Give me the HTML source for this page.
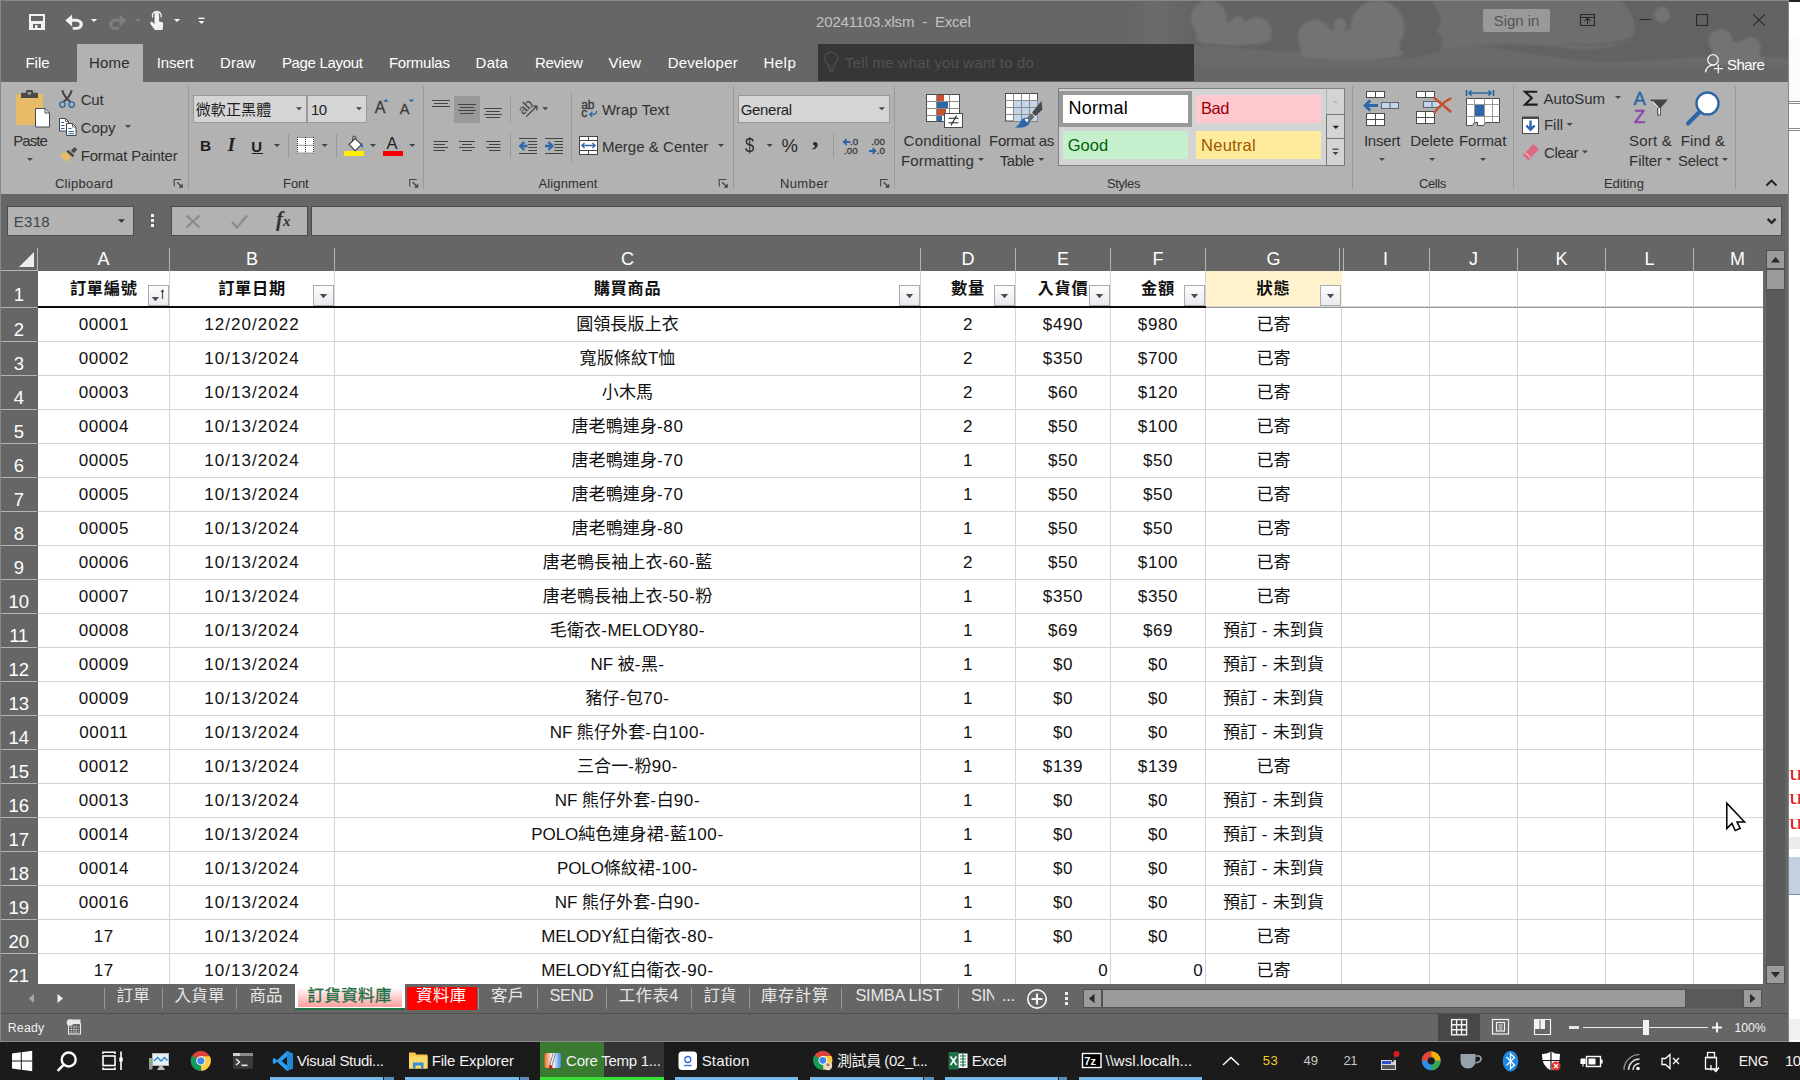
<!DOCTYPE html><html><head><meta charset="utf-8"><title>20241103.xlsm - Excel</title><style>html,body{margin:0;padding:0}body{width:1800px;height:1080px;position:relative;overflow:hidden;background:#fff;font-family:"Liberation Sans","Noto Sans CJK TC",sans-serif}
.b{position:absolute;box-sizing:border-box}.t{position:absolute;white-space:nowrap}svg{position:absolute;left:0;top:0}</style></head><body>
<div class="b" style="left:0px;top:0px;width:1800px;height:1080px;background:#ffffff;"></div>
<div class="b" style="left:1789px;top:0px;width:11px;height:2px;background:#222;"></div>
<div class="b" style="left:1789px;top:37px;width:11px;height:64px;background:#fbfbfb;"></div>
<div class="b" style="left:1789px;top:101px;width:11px;height:1px;background:#8a8a8a;"></div>
<div class="b" style="left:1789px;top:103px;width:11px;height:1px;background:#8a8a8a;"></div>
<div class="b" style="left:1789px;top:128px;width:11px;height:1px;background:#8a8a8a;"></div>
<div class="b" style="left:1789px;top:130px;width:11px;height:1px;background:#8a8a8a;"></div>
<div class="b" style="left:1789px;top:837px;width:11px;height:12px;background:#ececec;"></div>
<div class="b" style="left:1789px;top:857px;width:11px;height:38px;background:#c4cfdf;"></div>
<div class="b" style="left:1789px;top:894px;width:11px;height:1px;background:#7a8aa0;"></div>
<div class="b" style="left:1789px;top:1019px;width:11px;height:21px;background:#f0f0f0;"></div>
<div class="t" style="top:758.57px;font-size:20px;line-height:28px;color:#e8262a;left:1789.00px;font-family:'Liberation Serif',serif;transform:scaleX(1.35);transform-origin:left;"><span>u</span></div>
<div class="t" style="top:782.57px;font-size:20px;line-height:28px;color:#e8262a;left:1789.00px;font-family:'Liberation Serif',serif;transform:scaleX(1.35);transform-origin:left;"><span>u</span></div>
<div class="t" style="top:807.57px;font-size:20px;line-height:28px;color:#e8262a;left:1789.00px;font-family:'Liberation Serif',serif;transform:scaleX(1.35);transform-origin:left;"><span>u</span></div>
<div class="b" style="left:0px;top:0px;width:1789px;height:1042px;background:#666666;"></div>
<div class="b" style="left:0px;top:0px;width:1789px;height:1px;background:#888888;"></div>
<div class="b" style="left:0px;top:0px;width:1px;height:1042px;background:#888888;"></div>
<svg width="1800" height="82" viewBox="0 0 1800 82"><defs><filter id="bl" x="-5%" y="-20%" width="110%" height="140%"><feGaussianBlur stdDeviation=".8"/></filter><clipPath id="tc"><rect x="1" y="1" width="1788" height="65"/></clipPath><linearGradient id="tg" x1="0" x2="1"><stop offset="0" stop-color="#6b6b6b" stop-opacity="0"/><stop offset=".04" stop-color="#6b6b6b"/><stop offset=".1" stop-color="#636363"/><stop offset="1" stop-color="#626262"/></linearGradient></defs><rect x="1130" y="1" width="659" height="65" fill="url(#tg)"/><g clip-path="url(#tc)" filter="url(#bl)"><path d="M1150 66V47C1200 42 1250 50 1290 52S1380 62 1410 58S1460 44 1480 46S1560 60 1600 62S1700 52 1789 58V66Z" fill="#6a6a6a"/><path d="M1431 1H1622Q1642 25 1630 40Q1600 54 1560 47Q1500 40 1440 50Q1447 40 1436 30Q1447 18 1431 1Z" fill="#6e6e6e"/><g fill="#737373"><circle cx="1208.700" cy="18.300" r="18"/><circle cx="1238" cy="23" r="7"/><ellipse cx="1257.300" cy="30.300" rx="14" ry="13"/><ellipse cx="1234" cy="38" rx="38" ry="7"/><rect x="1196" y="22" width="72" height="22" rx="9"/><circle cx="1315" cy="36.700" r="17"/><circle cx="1340" cy="24.800" r="6.500"/><circle cx="1377.500" cy="27.500" r="27"/><ellipse cx="1352" cy="53" rx="52" ry="6.500"/><rect x="1300" y="30" width="100" height="28" rx="12"/><circle cx="1662" cy="14.700" r="8"/><circle cx="1720.500" cy="41.300" r="12"/><circle cx="1750" cy="48.600" r="11"/><ellipse cx="1737" cy="60" rx="28" ry="7"/><rect x="1712" y="42" width="48" height="22" rx="9"/></g><path d="M1568 43q30 6 62 -4.500" fill="none" stroke="#606060" stroke-width="1.500"/></g></svg>
<div class="t" style="top:10.90px;font-size:15px;line-height:21px;color:#c2c2c2;letter-spacing:-0.194px;left:816.10px;white-space:pre;"><span>20241103.xlsm  -  Excel</span></div>
<div class="b" style="left:1483px;top:9px;width:67px;height:23px;background:#999999;border-radius:2px;"></div>
<div class="t" style="top:9.90px;font-size:15px;line-height:21px;color:#555;letter-spacing:-0.068px;left:1493.80px;"><span>Sign in</span></div>
<div class="b" style="left:77px;top:44px;width:66px;height:38px;background:#b2b2b2;"></div>
<div class="t" style="top:52.30px;font-size:15px;line-height:21px;color:#fff;letter-spacing:0.007px;left:25.40px;"><span>File</span></div>
<div class="t" style="top:52.30px;font-size:15px;line-height:21px;color:#2b2b2b;letter-spacing:0.221px;left:89.00px;"><span>Home</span></div>
<div class="t" style="top:52.30px;font-size:15px;line-height:21px;color:#fff;letter-spacing:-0.103px;left:156.70px;"><span>Insert</span></div>
<div class="t" style="top:52.30px;font-size:15px;line-height:21px;color:#fff;letter-spacing:0.171px;left:219.90px;"><span>Draw</span></div>
<div class="t" style="top:52.30px;font-size:15px;line-height:21px;color:#fff;letter-spacing:-0.323px;left:281.90px;"><span>Page Layout</span></div>
<div class="t" style="top:52.30px;font-size:15px;line-height:21px;color:#fff;letter-spacing:-0.202px;left:388.90px;"><span>Formulas</span></div>
<div class="t" style="top:52.30px;font-size:15px;line-height:21px;color:#fff;letter-spacing:0.203px;left:475.60px;"><span>Data</span></div>
<div class="t" style="top:52.30px;font-size:15px;line-height:21px;color:#fff;letter-spacing:-0.248px;left:534.90px;"><span>Review</span></div>
<div class="t" style="top:52.30px;font-size:15px;line-height:21px;color:#fff;letter-spacing:0.113px;left:608.60px;"><span>View</span></div>
<div class="t" style="top:52.30px;font-size:15px;line-height:21px;color:#fff;letter-spacing:0.203px;left:667.70px;"><span>Developer</span></div>
<div class="t" style="top:52.30px;font-size:15px;line-height:21px;color:#fff;letter-spacing:0.510px;left:763.40px;"><span>Help</span></div>
<div class="b" style="left:818px;top:44px;width:376px;height:37px;background:#363636;"></div>
<div class="t" style="top:52.30px;font-size:15px;line-height:21px;color:#525252;letter-spacing:0.137px;left:845.10px;"><span>Tell me what you want to do</span></div>
<div class="t" style="top:54.30px;font-size:15px;line-height:21px;color:#fff;letter-spacing:-0.566px;left:1727.00px;"><span>Share</span></div>
<div class="b" style="left:1px;top:82px;width:1788px;height:112px;background:#b2b2b2;"></div>
<div class="b" style="left:188.0px;top:86px;width:1px;height:103px;background:#9a9a9a;"></div>
<div class="b" style="left:423.0px;top:86px;width:1px;height:103px;background:#9a9a9a;"></div>
<div class="b" style="left:733.0px;top:86px;width:1px;height:103px;background:#9a9a9a;"></div>
<div class="b" style="left:894.0px;top:86px;width:1px;height:103px;background:#9a9a9a;"></div>
<div class="b" style="left:1352.0px;top:86px;width:1px;height:103px;background:#9a9a9a;"></div>
<div class="b" style="left:1513.0px;top:86px;width:1px;height:103px;background:#9a9a9a;"></div>
<div class="b" style="left:1735.0px;top:86px;width:1px;height:103px;background:#9a9a9a;"></div>
<div class="b" style="left:288.0px;top:134px;width:1px;height:24px;background:#9a9a9a;"></div>
<div class="b" style="left:336.0px;top:134px;width:1px;height:24px;background:#9a9a9a;"></div>
<div class="b" style="left:510.0px;top:97px;width:1px;height:25px;background:#9a9a9a;"></div>
<div class="b" style="left:510.0px;top:134px;width:1px;height:24px;background:#9a9a9a;"></div>
<div class="b" style="left:571.0px;top:92px;width:1px;height:71px;background:#9a9a9a;"></div>
<div class="b" style="left:833.0px;top:134px;width:1px;height:24px;background:#9a9a9a;"></div>
<div class="t" style="top:129.80px;font-size:15px;line-height:21px;color:#303030;letter-spacing:-0.932px;left:13.20px;"><span>Paste</span></div>
<div class="t" style="top:89.00px;font-size:15px;line-height:21px;color:#303030;letter-spacing:-0.215px;left:80.70px;"><span>Cut</span></div>
<div class="t" style="top:116.80px;font-size:15px;line-height:21px;color:#303030;letter-spacing:-0.108px;left:80.70px;"><span>Copy</span></div>
<div class="t" style="top:144.80px;font-size:15px;line-height:21px;color:#303030;letter-spacing:-0.165px;left:80.70px;"><span>Format Painter</span></div>
<div class="t" style="top:174.90px;font-size:13px;line-height:18px;color:#303030;letter-spacing:0.316px;left:54.90px;"><span>Clipboard</span></div>
<div class="b" style="left:193px;top:95px;width:114px;height:28px;background:#d5d5d5;border:1px solid #989898;"></div>
<div class="b" style="left:307px;top:95px;width:60px;height:28px;background:#d5d5d5;border:1px solid #989898;"></div>
<div class="t" style="top:98.60px;font-size:15px;line-height:21px;color:#1e1e1e;letter-spacing:0.137px;left:195.70px;"><span>微軟正黑體</span></div>
<div class="t" style="top:98.80px;font-size:15px;line-height:21px;color:#1e1e1e;letter-spacing:-0.744px;left:311.10px;"><span>10</span></div>
<div class="t" style="top:97.46px;font-size:16px;line-height:22px;color:#3a3a3a;letter-spacing:0.528px;left:374.70px;-webkit-text-stroke:.3px #3a3a3a;"><span>A</span></div>
<div class="t" style="top:98.98px;font-size:14.5px;line-height:20px;color:#3a3a3a;letter-spacing:0.928px;left:399.80px;-webkit-text-stroke:.3px #3a3a3a;"><span>A</span></div>
<div class="t" style="top:134.93px;font-size:15.5px;line-height:22px;color:#1e1e1e;letter-spacing:-1.403px;left:199.90px;font-weight:700;"><span>B</span></div>
<div class="t" style="top:132.39px;font-size:18.5px;line-height:26px;color:#1e1e1e;left:227.70px;font-weight:700;font-style:italic;font-family:'Liberation Serif','DejaVu Serif',serif;"><span>I</span></div>
<div class="t" style="top:135.60px;font-size:15px;line-height:21px;color:#1e1e1e;letter-spacing:0.656px;left:251.30px;font-weight:700;"><span>U</span></div>
<div class="b" style="left:251.7px;top:152.6px;width:11px;height:1.2px;background:#1e1e1e;"></div>
<div class="b" style="left:344px;top:151px;width:20px;height:5px;background:#ffee00;"></div>
<div class="t" style="top:132.38px;font-size:16.5px;line-height:23px;color:#1e1e1e;letter-spacing:2.484px;left:386.40px;"><span>A</span></div>
<div class="b" style="left:383px;top:151px;width:20px;height:5px;background:#f40000;"></div>
<div class="t" style="top:174.90px;font-size:13px;line-height:18px;color:#303030;letter-spacing:-0.129px;left:283.10px;"><span>Font</span></div>
<div class="b" style="left:454px;top:96px;width:26px;height:27px;background:#999999;"></div>
<div class="t" style="top:99.00px;font-size:15px;line-height:21px;color:#303030;letter-spacing:0.057px;left:601.90px;"><span>Wrap Text</span></div>
<div class="t" style="top:136.00px;font-size:15px;line-height:21px;color:#303030;letter-spacing:0.044px;left:601.90px;"><span>Merge &amp; Center</span></div>
<div class="t" style="top:174.90px;font-size:13px;line-height:18px;color:#303030;letter-spacing:0.154px;left:538.40px;"><span>Alignment</span></div>
<div class="b" style="left:738px;top:95px;width:152px;height:28px;background:#d5d5d5;border:1px solid #989898;"></div>
<div class="t" style="top:99.00px;font-size:15px;line-height:21px;color:#1e1e1e;letter-spacing:-0.311px;left:740.70px;"><span>General</span></div>
<div class="t" style="top:131.07px;font-size:20px;line-height:28px;color:#2a2a2a;left:745.40px;transform:scaleX(.84);transform-origin:left;"><span>$</span></div>
<div class="t" style="top:133.09px;font-size:18.5px;line-height:26px;color:#2a2a2a;letter-spacing:-0.253px;left:781.40px;"><span>%</span></div>
<div class="t" style="top:120.29px;font-size:26px;line-height:36px;color:#2a2a2a;left:811.90px;font-weight:700;font-family:'Liberation Serif',serif;"><span>,</span></div>
<div class="t" style="top:174.90px;font-size:13px;line-height:18px;color:#303030;letter-spacing:0.408px;left:779.90px;"><span>Number</span></div>
<div class="t" style="top:129.80px;font-size:15px;line-height:21px;color:#303030;letter-spacing:0.222px;left:903.60px;"><span>Conditional</span></div>
<div class="t" style="top:149.80px;font-size:15px;line-height:21px;color:#303030;letter-spacing:0.110px;left:901.10px;"><span>Formatting</span></div>
<div class="t" style="top:129.80px;font-size:15px;line-height:21px;color:#303030;letter-spacing:-0.302px;left:989.10px;"><span>Format as</span></div>
<div class="t" style="top:149.80px;font-size:15px;line-height:21px;color:#303030;letter-spacing:-0.332px;left:999.70px;"><span>Table</span></div>
<div class="b" style="left:1058px;top:88px;width:287px;height:78px;background:#d4d4d4;border:1px solid #808080;"></div>
<div class="b" style="left:1059px;top:91px;width:133px;height:36px;background:#999999;"></div>
<div class="b" style="left:1063px;top:95px;width:125px;height:28px;background:#ffffff;"></div>
<div class="b" style="left:1196px;top:95px;width:125px;height:28px;background:#ffc7ce;"></div>
<div class="b" style="left:1063px;top:131px;width:125px;height:28px;background:#c6efce;"></div>
<div class="b" style="left:1196px;top:131px;width:125px;height:28px;background:#ffeb9c;"></div>
<div class="t" style="top:95.76px;font-size:18px;line-height:25px;color:#000;letter-spacing:0.281px;left:1068.40px;"><span>Normal</span></div>
<div class="t" style="top:97.28px;font-size:16.5px;line-height:23px;color:#9c0006;letter-spacing:-0.520px;left:1201.10px;"><span>Bad</span></div>
<div class="t" style="top:133.58px;font-size:16.5px;line-height:23px;color:#006100;letter-spacing:0.006px;left:1067.70px;"><span>Good</span></div>
<div class="t" style="top:133.58px;font-size:16.5px;line-height:23px;color:#9c5700;letter-spacing:0.228px;left:1201.10px;"><span>Neutral</span></div>
<div class="b" style="left:1326px;top:88px;width:19px;height:27px;background:#d4d4d4;border:1px solid #808080;border-left-color:#b4b4b4;"></div>
<div class="b" style="left:1326px;top:114px;width:19px;height:25px;background:#d4d4d4;border:1px solid #777;"></div>
<div class="b" style="left:1326px;top:138px;width:19px;height:28px;background:#d4d4d4;border:1px solid #777;"></div>
<div class="t" style="top:174.90px;font-size:13px;line-height:18px;color:#303030;letter-spacing:-0.368px;left:1106.90px;"><span>Styles</span></div>
<div class="t" style="top:129.80px;font-size:15px;line-height:21px;color:#303030;letter-spacing:-0.186px;left:1363.90px;"><span>Insert</span></div>
<div class="t" style="top:129.80px;font-size:15px;line-height:21px;color:#303030;letter-spacing:0.057px;left:1410.20px;"><span>Delete</span></div>
<div class="t" style="top:129.80px;font-size:15px;line-height:21px;color:#303030;letter-spacing:-0.003px;left:1458.90px;"><span>Format</span></div>
<div class="t" style="top:174.90px;font-size:13px;line-height:18px;color:#303030;letter-spacing:-0.421px;left:1419.10px;"><span>Cells</span></div>
<div class="t" style="top:88.10px;font-size:15px;line-height:21px;color:#303030;letter-spacing:-0.029px;left:1543.60px;"><span>AutoSum</span></div>
<div class="t" style="top:114.00px;font-size:15px;line-height:21px;color:#303030;letter-spacing:0.007px;left:1543.90px;"><span>Fill</span></div>
<div class="t" style="top:141.50px;font-size:15px;line-height:21px;color:#303030;letter-spacing:-0.332px;left:1543.90px;"><span>Clear</span></div>
<div class="t" style="top:86.39px;font-size:18.5px;line-height:26px;color:#2e67a7;letter-spacing:1.556px;left:1633.40px;-webkit-text-stroke:.5px #2e67a7;"><span>A</span></div>
<div class="t" style="top:103.59px;font-size:18.5px;line-height:26px;color:#8e44ad;letter-spacing:0.487px;left:1634.10px;-webkit-text-stroke:.5px #8e44ad;"><span>Z</span></div>
<div class="t" style="top:129.80px;font-size:15px;line-height:21px;color:#303030;letter-spacing:0.185px;left:1629.10px;"><span>Sort &amp;</span></div>
<div class="t" style="top:149.80px;font-size:15px;line-height:21px;color:#303030;letter-spacing:-0.091px;left:1629.10px;"><span>Filter</span></div>
<div class="t" style="top:129.80px;font-size:15px;line-height:21px;color:#303030;letter-spacing:0.173px;left:1680.70px;"><span>Find &amp;</span></div>
<div class="t" style="top:149.80px;font-size:15px;line-height:21px;color:#303030;letter-spacing:-0.284px;left:1678.10px;"><span>Select</span></div>
<div class="t" style="top:174.90px;font-size:13px;line-height:18px;color:#303030;letter-spacing:0.036px;left:1603.90px;"><span>Editing</span></div>
<div class="b" style="left:7px;top:206px;width:127px;height:30px;background:#b2b2b2;border:1px solid #4d4d4d;"></div>
<div class="t" style="top:211.00px;font-size:15px;line-height:21px;color:#444;letter-spacing:0.288px;left:13.80px;"><span>E318</span></div>
<div class="b" style="left:151px;top:214.2px;width:3.2px;height:3.2px;background:#f2f2f2;"></div>
<div class="b" style="left:151px;top:219px;width:3.2px;height:3.2px;background:#f2f2f2;"></div>
<div class="b" style="left:151px;top:223.8px;width:3.2px;height:3.2px;background:#f2f2f2;"></div>
<div class="b" style="left:171px;top:206px;width:137px;height:30px;background:#b2b2b2;border:1px solid #4d4d4d;"></div>
<div class="t" style="top:204.72px;font-size:21px;line-height:29px;color:#333;left:275.90px;font-weight:700;font-style:italic;font-family:'Liberation Serif',serif;"><span>f</span></div>
<div class="t" style="top:211.30px;font-size:15px;line-height:21px;color:#333;left:282.90px;font-weight:700;font-style:italic;font-family:'Liberation Serif',serif;"><span>x</span></div>
<div class="b" style="left:311px;top:206px;width:1471px;height:30px;background:#b2b2b2;border:1px solid #4d4d4d;"></div>
<div class="b" style="left:1px;top:248px;width:1762px;height:23px;background:#666666;"></div>
<div class="b" style="left:38px;top:271px;width:1725px;height:713px;background:#ffffff;"></div>
<div class="b" style="left:1px;top:270px;width:36px;height:1px;background:#b4b4b4;"></div>
<div class="b" style="left:37px;top:248px;width:1px;height:23px;background:#b4b4b4;"></div>
<div class="t" style="top:246.66px;font-size:18px;line-height:25px;color:#ffffff;left:63.50px;width:80px;text-align:center;"><span>A</span></div>
<div class="b" style="left:169px;top:248px;width:1px;height:23px;background:#b4b4b4;"></div>
<div class="t" style="top:246.66px;font-size:18px;line-height:25px;color:#ffffff;left:212.00px;width:80px;text-align:center;"><span>B</span></div>
<div class="b" style="left:334px;top:248px;width:1px;height:23px;background:#b4b4b4;"></div>
<div class="t" style="top:246.66px;font-size:18px;line-height:25px;color:#ffffff;left:587.50px;width:80px;text-align:center;"><span>C</span></div>
<div class="b" style="left:920px;top:248px;width:1px;height:23px;background:#b4b4b4;"></div>
<div class="t" style="top:246.66px;font-size:18px;line-height:25px;color:#ffffff;left:928.00px;width:80px;text-align:center;"><span>D</span></div>
<div class="b" style="left:1015px;top:248px;width:1px;height:23px;background:#b4b4b4;"></div>
<div class="t" style="top:246.66px;font-size:18px;line-height:25px;color:#ffffff;left:1023.00px;width:80px;text-align:center;"><span>E</span></div>
<div class="b" style="left:1110px;top:248px;width:1px;height:23px;background:#b4b4b4;"></div>
<div class="t" style="top:246.66px;font-size:18px;line-height:25px;color:#ffffff;left:1118.00px;width:80px;text-align:center;"><span>F</span></div>
<div class="b" style="left:1205px;top:248px;width:1px;height:23px;background:#b4b4b4;"></div>
<div class="t" style="top:246.66px;font-size:18px;line-height:25px;color:#ffffff;left:1233.50px;width:80px;text-align:center;"><span>G</span></div>
<div class="t" style="top:246.66px;font-size:18px;line-height:25px;color:#ffffff;left:1345.50px;width:80px;text-align:center;"><span>I</span></div>
<div class="b" style="left:1429px;top:248px;width:1px;height:23px;background:#b4b4b4;"></div>
<div class="t" style="top:246.66px;font-size:18px;line-height:25px;color:#ffffff;left:1433.50px;width:80px;text-align:center;"><span>J</span></div>
<div class="b" style="left:1517px;top:248px;width:1px;height:23px;background:#b4b4b4;"></div>
<div class="t" style="top:246.66px;font-size:18px;line-height:25px;color:#ffffff;left:1521.50px;width:80px;text-align:center;"><span>K</span></div>
<div class="b" style="left:1605px;top:248px;width:1px;height:23px;background:#b4b4b4;"></div>
<div class="t" style="top:246.66px;font-size:18px;line-height:25px;color:#ffffff;left:1609.50px;width:80px;text-align:center;"><span>L</span></div>
<div class="b" style="left:1693px;top:248px;width:1px;height:23px;background:#b4b4b4;"></div>
<div class="t" style="top:246.66px;font-size:18px;line-height:25px;color:#ffffff;left:1697.50px;width:80px;text-align:center;"><span>M</span></div>
<div class="b" style="left:1339px;top:248px;width:1px;height:23px;background:#b4b4b4;"></div>
<div class="b" style="left:1343px;top:248px;width:1px;height:23px;background:#b4b4b4;"></div>
<div class="b" style="left:169px;top:271px;width:1px;height:713px;background:#d4d4d4;"></div>
<div class="b" style="left:334px;top:271px;width:1px;height:713px;background:#d4d4d4;"></div>
<div class="b" style="left:920px;top:271px;width:1px;height:713px;background:#d4d4d4;"></div>
<div class="b" style="left:1015px;top:271px;width:1px;height:713px;background:#d4d4d4;"></div>
<div class="b" style="left:1110px;top:271px;width:1px;height:713px;background:#d4d4d4;"></div>
<div class="b" style="left:1205px;top:271px;width:1px;height:713px;background:#d4d4d4;"></div>
<div class="b" style="left:1341px;top:271px;width:1px;height:713px;background:#d4d4d4;"></div>
<div class="b" style="left:1429px;top:271px;width:1px;height:713px;background:#d4d4d4;"></div>
<div class="b" style="left:1517px;top:271px;width:1px;height:713px;background:#d4d4d4;"></div>
<div class="b" style="left:1605px;top:271px;width:1px;height:713px;background:#d4d4d4;"></div>
<div class="b" style="left:1693px;top:271px;width:1px;height:713px;background:#d4d4d4;"></div>
<div class="b" style="left:1206px;top:271px;width:136px;height:36px;background:#fff2cc;"></div>
<div class="b" style="left:1px;top:271px;width:37px;height:713px;background:#666666;"></div>
<div class="b" style="left:38px;top:306px;width:1725px;height:1px;background:#d4d4d4;"></div>
<div class="b" style="left:1px;top:307px;width:36px;height:1px;background:#b4b4b4;"></div>
<div class="t" style="top:281.79px;font-size:18.5px;line-height:26px;color:#ffffff;left:-1.20px;width:40px;text-align:center;clip-path:inset(0 0 0px 0);"><span>1</span></div>
<div class="b" style="left:38px;top:341px;width:1725px;height:1px;background:#d4d4d4;"></div>
<div class="b" style="left:1px;top:341px;width:36px;height:1px;background:#b4b4b4;"></div>
<div class="t" style="top:316.79px;font-size:18.5px;line-height:26px;color:#ffffff;left:-1.20px;width:40px;text-align:center;clip-path:inset(0 0 0px 0);"><span>2</span></div>
<div class="b" style="left:38px;top:375px;width:1725px;height:1px;background:#d4d4d4;"></div>
<div class="b" style="left:1px;top:375px;width:36px;height:1px;background:#b4b4b4;"></div>
<div class="t" style="top:350.79px;font-size:18.5px;line-height:26px;color:#ffffff;left:-1.20px;width:40px;text-align:center;clip-path:inset(0 0 0px 0);"><span>3</span></div>
<div class="b" style="left:38px;top:409px;width:1725px;height:1px;background:#d4d4d4;"></div>
<div class="b" style="left:1px;top:409px;width:36px;height:1px;background:#b4b4b4;"></div>
<div class="t" style="top:384.79px;font-size:18.5px;line-height:26px;color:#ffffff;left:-1.20px;width:40px;text-align:center;clip-path:inset(0 0 0px 0);"><span>4</span></div>
<div class="b" style="left:38px;top:443px;width:1725px;height:1px;background:#d4d4d4;"></div>
<div class="b" style="left:1px;top:443px;width:36px;height:1px;background:#b4b4b4;"></div>
<div class="t" style="top:418.79px;font-size:18.5px;line-height:26px;color:#ffffff;left:-1.20px;width:40px;text-align:center;clip-path:inset(0 0 0px 0);"><span>5</span></div>
<div class="b" style="left:38px;top:477px;width:1725px;height:1px;background:#d4d4d4;"></div>
<div class="b" style="left:1px;top:477px;width:36px;height:1px;background:#b4b4b4;"></div>
<div class="t" style="top:452.79px;font-size:18.5px;line-height:26px;color:#ffffff;left:-1.20px;width:40px;text-align:center;clip-path:inset(0 0 0px 0);"><span>6</span></div>
<div class="b" style="left:38px;top:511px;width:1725px;height:1px;background:#d4d4d4;"></div>
<div class="b" style="left:1px;top:511px;width:36px;height:1px;background:#b4b4b4;"></div>
<div class="t" style="top:486.79px;font-size:18.5px;line-height:26px;color:#ffffff;left:-1.20px;width:40px;text-align:center;clip-path:inset(0 0 0px 0);"><span>7</span></div>
<div class="b" style="left:38px;top:545px;width:1725px;height:1px;background:#d4d4d4;"></div>
<div class="b" style="left:1px;top:545px;width:36px;height:1px;background:#b4b4b4;"></div>
<div class="t" style="top:520.79px;font-size:18.5px;line-height:26px;color:#ffffff;left:-1.20px;width:40px;text-align:center;clip-path:inset(0 0 0px 0);"><span>8</span></div>
<div class="b" style="left:38px;top:579px;width:1725px;height:1px;background:#d4d4d4;"></div>
<div class="b" style="left:1px;top:579px;width:36px;height:1px;background:#b4b4b4;"></div>
<div class="t" style="top:554.79px;font-size:18.5px;line-height:26px;color:#ffffff;left:-1.20px;width:40px;text-align:center;clip-path:inset(0 0 0px 0);"><span>9</span></div>
<div class="b" style="left:38px;top:613px;width:1725px;height:1px;background:#d4d4d4;"></div>
<div class="b" style="left:1px;top:613px;width:36px;height:1px;background:#b4b4b4;"></div>
<div class="t" style="top:588.79px;font-size:18.5px;line-height:26px;color:#ffffff;left:-1.20px;width:40px;text-align:center;clip-path:inset(0 0 0px 0);"><span>10</span></div>
<div class="b" style="left:38px;top:647px;width:1725px;height:1px;background:#d4d4d4;"></div>
<div class="b" style="left:1px;top:647px;width:36px;height:1px;background:#b4b4b4;"></div>
<div class="t" style="top:622.79px;font-size:18.5px;line-height:26px;color:#ffffff;left:-1.20px;width:40px;text-align:center;clip-path:inset(0 0 0px 0);"><span>11</span></div>
<div class="b" style="left:38px;top:681px;width:1725px;height:1px;background:#d4d4d4;"></div>
<div class="b" style="left:1px;top:681px;width:36px;height:1px;background:#b4b4b4;"></div>
<div class="t" style="top:656.79px;font-size:18.5px;line-height:26px;color:#ffffff;left:-1.20px;width:40px;text-align:center;clip-path:inset(0 0 0px 0);"><span>12</span></div>
<div class="b" style="left:38px;top:715px;width:1725px;height:1px;background:#d4d4d4;"></div>
<div class="b" style="left:1px;top:715px;width:36px;height:1px;background:#b4b4b4;"></div>
<div class="t" style="top:690.79px;font-size:18.5px;line-height:26px;color:#ffffff;left:-1.20px;width:40px;text-align:center;clip-path:inset(0 0 0px 0);"><span>13</span></div>
<div class="b" style="left:38px;top:749px;width:1725px;height:1px;background:#d4d4d4;"></div>
<div class="b" style="left:1px;top:749px;width:36px;height:1px;background:#b4b4b4;"></div>
<div class="t" style="top:724.79px;font-size:18.5px;line-height:26px;color:#ffffff;left:-1.20px;width:40px;text-align:center;clip-path:inset(0 0 0px 0);"><span>14</span></div>
<div class="b" style="left:38px;top:783px;width:1725px;height:1px;background:#d4d4d4;"></div>
<div class="b" style="left:1px;top:783px;width:36px;height:1px;background:#b4b4b4;"></div>
<div class="t" style="top:758.79px;font-size:18.5px;line-height:26px;color:#ffffff;left:-1.20px;width:40px;text-align:center;clip-path:inset(0 0 0px 0);"><span>15</span></div>
<div class="b" style="left:38px;top:817px;width:1725px;height:1px;background:#d4d4d4;"></div>
<div class="b" style="left:1px;top:817px;width:36px;height:1px;background:#b4b4b4;"></div>
<div class="t" style="top:792.79px;font-size:18.5px;line-height:26px;color:#ffffff;left:-1.20px;width:40px;text-align:center;clip-path:inset(0 0 0px 0);"><span>16</span></div>
<div class="b" style="left:38px;top:851px;width:1725px;height:1px;background:#d4d4d4;"></div>
<div class="b" style="left:1px;top:851px;width:36px;height:1px;background:#b4b4b4;"></div>
<div class="t" style="top:826.79px;font-size:18.5px;line-height:26px;color:#ffffff;left:-1.20px;width:40px;text-align:center;clip-path:inset(0 0 0px 0);"><span>17</span></div>
<div class="b" style="left:38px;top:885px;width:1725px;height:1px;background:#d4d4d4;"></div>
<div class="b" style="left:1px;top:885px;width:36px;height:1px;background:#b4b4b4;"></div>
<div class="t" style="top:860.79px;font-size:18.5px;line-height:26px;color:#ffffff;left:-1.20px;width:40px;text-align:center;clip-path:inset(0 0 0px 0);"><span>18</span></div>
<div class="b" style="left:38px;top:919px;width:1725px;height:1px;background:#d4d4d4;"></div>
<div class="b" style="left:1px;top:919px;width:36px;height:1px;background:#b4b4b4;"></div>
<div class="t" style="top:894.79px;font-size:18.5px;line-height:26px;color:#ffffff;left:-1.20px;width:40px;text-align:center;clip-path:inset(0 0 0px 0);"><span>19</span></div>
<div class="b" style="left:38px;top:953px;width:1725px;height:1px;background:#d4d4d4;"></div>
<div class="b" style="left:1px;top:953px;width:36px;height:1px;background:#b4b4b4;"></div>
<div class="t" style="top:928.79px;font-size:18.5px;line-height:26px;color:#ffffff;left:-1.20px;width:40px;text-align:center;clip-path:inset(0 0 0px 0);"><span>20</span></div>
<div class="t" style="top:962.79px;font-size:18.5px;line-height:26px;color:#ffffff;left:-1.20px;width:40px;text-align:center;clip-path:inset(0 0 3px 0);"><span>21</span></div>
<div class="b" style="left:1206px;top:307px;width:557px;height:1px;background:#9a9a9a;"></div>
<div class="b" style="left:38px;top:306px;width:1168px;height:2px;background:#0a0a0a;"></div>
<div class="b" style="left:148px;top:285px;width:21px;height:21px;background:linear-gradient(#fdfdfd,#e9eaee);border:1px solid #a9acb5;"></div>
<div class="b" style="left:313px;top:285px;width:21px;height:21px;background:linear-gradient(#fdfdfd,#e9eaee);border:1px solid #a9acb5;"></div>
<div class="b" style="left:899px;top:285px;width:21px;height:21px;background:linear-gradient(#fdfdfd,#e9eaee);border:1px solid #a9acb5;"></div>
<div class="b" style="left:994px;top:285px;width:21px;height:21px;background:linear-gradient(#fdfdfd,#e9eaee);border:1px solid #a9acb5;"></div>
<div class="b" style="left:1089px;top:285px;width:21px;height:21px;background:linear-gradient(#fdfdfd,#e9eaee);border:1px solid #a9acb5;"></div>
<div class="b" style="left:1184px;top:285px;width:21px;height:21px;background:linear-gradient(#fdfdfd,#e9eaee);border:1px solid #a9acb5;"></div>
<div class="b" style="left:1320px;top:285px;width:21px;height:21px;background:linear-gradient(#fdfdfd,#e9eaee);border:1px solid #a9acb5;"></div>
<div class="t" style="top:277.49px;font-size:16.2px;line-height:23px;color:#111;left:3.80px;width:200px;text-align:center;font-weight:700;letter-spacing:.75px;"><span>訂單編號</span></div>
<div class="t" style="top:277.49px;font-size:16.2px;line-height:23px;color:#111;left:152.00px;width:200px;text-align:center;font-weight:700;letter-spacing:.75px;"><span>訂單日期</span></div>
<div class="t" style="top:277.49px;font-size:16.2px;line-height:23px;color:#111;left:527.50px;width:200px;text-align:center;font-weight:700;letter-spacing:.75px;"><span>購買商品</span></div>
<div class="t" style="top:277.49px;font-size:16.2px;line-height:23px;color:#111;left:868.00px;width:200px;text-align:center;font-weight:700;letter-spacing:.75px;"><span>數量</span></div>
<div class="t" style="top:277.49px;font-size:16.2px;line-height:23px;color:#111;left:963.00px;width:200px;text-align:center;font-weight:700;letter-spacing:.75px;"><span>入貨價</span></div>
<div class="t" style="top:277.49px;font-size:16.2px;line-height:23px;color:#111;left:1058.00px;width:200px;text-align:center;font-weight:700;letter-spacing:.75px;"><span>金額</span></div>
<div class="t" style="top:277.49px;font-size:16.2px;line-height:23px;color:#111;left:1173.50px;width:200px;text-align:center;font-weight:700;letter-spacing:.75px;"><span>狀態</span></div>
<div class="t" style="top:312.81px;font-size:17px;line-height:24px;color:#111;left:-46.20px;width:300px;text-align:center;"><span><span style="letter-spacing:0.62px">00001</span></span></div>
<div class="t" style="top:312.81px;font-size:17px;line-height:24px;color:#111;left:102.00px;width:300px;text-align:center;"><span><span style="letter-spacing:1.05px">12/20/2022</span></span></div>
<div class="t" style="top:312.81px;font-size:17px;line-height:24px;color:#111;left:477.50px;width:300px;text-align:center;"><span><span style="letter-spacing:0.12px">圓領長版上衣</span></span></div>
<div class="t" style="top:312.81px;font-size:17px;line-height:24px;color:#111;left:818.00px;width:300px;text-align:center;"><span><span style="letter-spacing:0.62px">2</span></span></div>
<div class="t" style="top:312.81px;font-size:17px;line-height:24px;color:#111;left:913.00px;width:300px;text-align:center;"><span><span style="letter-spacing:0.62px">$490</span></span></div>
<div class="t" style="top:312.81px;font-size:17px;line-height:24px;color:#111;left:1008.00px;width:300px;text-align:center;"><span><span style="letter-spacing:0.62px">$980</span></span></div>
<div class="t" style="top:312.81px;font-size:17px;line-height:24px;color:#111;left:1123.50px;width:300px;text-align:center;"><span><span style="letter-spacing:0.12px">已寄</span></span></div>
<div class="t" style="top:346.81px;font-size:17px;line-height:24px;color:#111;left:-46.20px;width:300px;text-align:center;"><span><span style="letter-spacing:0.62px">00002</span></span></div>
<div class="t" style="top:346.81px;font-size:17px;line-height:24px;color:#111;left:102.00px;width:300px;text-align:center;"><span><span style="letter-spacing:1.05px">10/13/2024</span></span></div>
<div class="t" style="top:346.81px;font-size:17px;line-height:24px;color:#111;left:477.50px;width:300px;text-align:center;"><span><span style="letter-spacing:0.12px">寬版條紋</span><span style="letter-spacing:-0.1px">T</span><span style="letter-spacing:0.12px">恤</span></span></div>
<div class="t" style="top:346.81px;font-size:17px;line-height:24px;color:#111;left:818.00px;width:300px;text-align:center;"><span><span style="letter-spacing:0.62px">2</span></span></div>
<div class="t" style="top:346.81px;font-size:17px;line-height:24px;color:#111;left:913.00px;width:300px;text-align:center;"><span><span style="letter-spacing:0.62px">$350</span></span></div>
<div class="t" style="top:346.81px;font-size:17px;line-height:24px;color:#111;left:1008.00px;width:300px;text-align:center;"><span><span style="letter-spacing:0.62px">$700</span></span></div>
<div class="t" style="top:346.81px;font-size:17px;line-height:24px;color:#111;left:1123.50px;width:300px;text-align:center;"><span><span style="letter-spacing:0.12px">已寄</span></span></div>
<div class="t" style="top:380.81px;font-size:17px;line-height:24px;color:#111;left:-46.20px;width:300px;text-align:center;"><span><span style="letter-spacing:0.62px">00003</span></span></div>
<div class="t" style="top:380.81px;font-size:17px;line-height:24px;color:#111;left:102.00px;width:300px;text-align:center;"><span><span style="letter-spacing:1.05px">10/13/2024</span></span></div>
<div class="t" style="top:380.81px;font-size:17px;line-height:24px;color:#111;left:477.50px;width:300px;text-align:center;"><span><span style="letter-spacing:0.12px">小木馬</span></span></div>
<div class="t" style="top:380.81px;font-size:17px;line-height:24px;color:#111;left:818.00px;width:300px;text-align:center;"><span><span style="letter-spacing:0.62px">2</span></span></div>
<div class="t" style="top:380.81px;font-size:17px;line-height:24px;color:#111;left:913.00px;width:300px;text-align:center;"><span><span style="letter-spacing:0.62px">$60</span></span></div>
<div class="t" style="top:380.81px;font-size:17px;line-height:24px;color:#111;left:1008.00px;width:300px;text-align:center;"><span><span style="letter-spacing:0.62px">$120</span></span></div>
<div class="t" style="top:380.81px;font-size:17px;line-height:24px;color:#111;left:1123.50px;width:300px;text-align:center;"><span><span style="letter-spacing:0.12px">已寄</span></span></div>
<div class="t" style="top:414.81px;font-size:17px;line-height:24px;color:#111;left:-46.20px;width:300px;text-align:center;"><span><span style="letter-spacing:0.62px">00004</span></span></div>
<div class="t" style="top:414.81px;font-size:17px;line-height:24px;color:#111;left:102.00px;width:300px;text-align:center;"><span><span style="letter-spacing:1.05px">10/13/2024</span></span></div>
<div class="t" style="top:414.81px;font-size:17px;line-height:24px;color:#111;left:477.50px;width:300px;text-align:center;"><span><span style="letter-spacing:0.12px">唐老鴨連身</span><span style="letter-spacing:0.62px">-80</span></span></div>
<div class="t" style="top:414.81px;font-size:17px;line-height:24px;color:#111;left:818.00px;width:300px;text-align:center;"><span><span style="letter-spacing:0.62px">2</span></span></div>
<div class="t" style="top:414.81px;font-size:17px;line-height:24px;color:#111;left:913.00px;width:300px;text-align:center;"><span><span style="letter-spacing:0.62px">$50</span></span></div>
<div class="t" style="top:414.81px;font-size:17px;line-height:24px;color:#111;left:1008.00px;width:300px;text-align:center;"><span><span style="letter-spacing:0.62px">$100</span></span></div>
<div class="t" style="top:414.81px;font-size:17px;line-height:24px;color:#111;left:1123.50px;width:300px;text-align:center;"><span><span style="letter-spacing:0.12px">已寄</span></span></div>
<div class="t" style="top:448.81px;font-size:17px;line-height:24px;color:#111;left:-46.20px;width:300px;text-align:center;"><span><span style="letter-spacing:0.62px">00005</span></span></div>
<div class="t" style="top:448.81px;font-size:17px;line-height:24px;color:#111;left:102.00px;width:300px;text-align:center;"><span><span style="letter-spacing:1.05px">10/13/2024</span></span></div>
<div class="t" style="top:448.81px;font-size:17px;line-height:24px;color:#111;left:477.50px;width:300px;text-align:center;"><span><span style="letter-spacing:0.12px">唐老鴨連身</span><span style="letter-spacing:0.62px">-70</span></span></div>
<div class="t" style="top:448.81px;font-size:17px;line-height:24px;color:#111;left:818.00px;width:300px;text-align:center;"><span><span style="letter-spacing:0.62px">1</span></span></div>
<div class="t" style="top:448.81px;font-size:17px;line-height:24px;color:#111;left:913.00px;width:300px;text-align:center;"><span><span style="letter-spacing:0.62px">$50</span></span></div>
<div class="t" style="top:448.81px;font-size:17px;line-height:24px;color:#111;left:1008.00px;width:300px;text-align:center;"><span><span style="letter-spacing:0.62px">$50</span></span></div>
<div class="t" style="top:448.81px;font-size:17px;line-height:24px;color:#111;left:1123.50px;width:300px;text-align:center;"><span><span style="letter-spacing:0.12px">已寄</span></span></div>
<div class="t" style="top:482.81px;font-size:17px;line-height:24px;color:#111;left:-46.20px;width:300px;text-align:center;"><span><span style="letter-spacing:0.62px">00005</span></span></div>
<div class="t" style="top:482.81px;font-size:17px;line-height:24px;color:#111;left:102.00px;width:300px;text-align:center;"><span><span style="letter-spacing:1.05px">10/13/2024</span></span></div>
<div class="t" style="top:482.81px;font-size:17px;line-height:24px;color:#111;left:477.50px;width:300px;text-align:center;"><span><span style="letter-spacing:0.12px">唐老鴨連身</span><span style="letter-spacing:0.62px">-70</span></span></div>
<div class="t" style="top:482.81px;font-size:17px;line-height:24px;color:#111;left:818.00px;width:300px;text-align:center;"><span><span style="letter-spacing:0.62px">1</span></span></div>
<div class="t" style="top:482.81px;font-size:17px;line-height:24px;color:#111;left:913.00px;width:300px;text-align:center;"><span><span style="letter-spacing:0.62px">$50</span></span></div>
<div class="t" style="top:482.81px;font-size:17px;line-height:24px;color:#111;left:1008.00px;width:300px;text-align:center;"><span><span style="letter-spacing:0.62px">$50</span></span></div>
<div class="t" style="top:482.81px;font-size:17px;line-height:24px;color:#111;left:1123.50px;width:300px;text-align:center;"><span><span style="letter-spacing:0.12px">已寄</span></span></div>
<div class="t" style="top:516.81px;font-size:17px;line-height:24px;color:#111;left:-46.20px;width:300px;text-align:center;"><span><span style="letter-spacing:0.62px">00005</span></span></div>
<div class="t" style="top:516.81px;font-size:17px;line-height:24px;color:#111;left:102.00px;width:300px;text-align:center;"><span><span style="letter-spacing:1.05px">10/13/2024</span></span></div>
<div class="t" style="top:516.81px;font-size:17px;line-height:24px;color:#111;left:477.50px;width:300px;text-align:center;"><span><span style="letter-spacing:0.12px">唐老鴨連身</span><span style="letter-spacing:0.62px">-80</span></span></div>
<div class="t" style="top:516.81px;font-size:17px;line-height:24px;color:#111;left:818.00px;width:300px;text-align:center;"><span><span style="letter-spacing:0.62px">1</span></span></div>
<div class="t" style="top:516.81px;font-size:17px;line-height:24px;color:#111;left:913.00px;width:300px;text-align:center;"><span><span style="letter-spacing:0.62px">$50</span></span></div>
<div class="t" style="top:516.81px;font-size:17px;line-height:24px;color:#111;left:1008.00px;width:300px;text-align:center;"><span><span style="letter-spacing:0.62px">$50</span></span></div>
<div class="t" style="top:516.81px;font-size:17px;line-height:24px;color:#111;left:1123.50px;width:300px;text-align:center;"><span><span style="letter-spacing:0.12px">已寄</span></span></div>
<div class="t" style="top:550.81px;font-size:17px;line-height:24px;color:#111;left:-46.20px;width:300px;text-align:center;"><span><span style="letter-spacing:0.62px">00006</span></span></div>
<div class="t" style="top:550.81px;font-size:17px;line-height:24px;color:#111;left:102.00px;width:300px;text-align:center;"><span><span style="letter-spacing:1.05px">10/13/2024</span></span></div>
<div class="t" style="top:550.81px;font-size:17px;line-height:24px;color:#111;left:477.50px;width:300px;text-align:center;"><span><span style="letter-spacing:0.12px">唐老鴨長袖上衣</span><span style="letter-spacing:0.62px">-60-</span><span style="letter-spacing:0.12px">藍</span></span></div>
<div class="t" style="top:550.81px;font-size:17px;line-height:24px;color:#111;left:818.00px;width:300px;text-align:center;"><span><span style="letter-spacing:0.62px">2</span></span></div>
<div class="t" style="top:550.81px;font-size:17px;line-height:24px;color:#111;left:913.00px;width:300px;text-align:center;"><span><span style="letter-spacing:0.62px">$50</span></span></div>
<div class="t" style="top:550.81px;font-size:17px;line-height:24px;color:#111;left:1008.00px;width:300px;text-align:center;"><span><span style="letter-spacing:0.62px">$100</span></span></div>
<div class="t" style="top:550.81px;font-size:17px;line-height:24px;color:#111;left:1123.50px;width:300px;text-align:center;"><span><span style="letter-spacing:0.12px">已寄</span></span></div>
<div class="t" style="top:584.81px;font-size:17px;line-height:24px;color:#111;left:-46.20px;width:300px;text-align:center;"><span><span style="letter-spacing:0.62px">00007</span></span></div>
<div class="t" style="top:584.81px;font-size:17px;line-height:24px;color:#111;left:102.00px;width:300px;text-align:center;"><span><span style="letter-spacing:1.05px">10/13/2024</span></span></div>
<div class="t" style="top:584.81px;font-size:17px;line-height:24px;color:#111;left:477.50px;width:300px;text-align:center;"><span><span style="letter-spacing:0.12px">唐老鴨長袖上衣</span><span style="letter-spacing:0.62px">-50-</span><span style="letter-spacing:0.12px">粉</span></span></div>
<div class="t" style="top:584.81px;font-size:17px;line-height:24px;color:#111;left:818.00px;width:300px;text-align:center;"><span><span style="letter-spacing:0.62px">1</span></span></div>
<div class="t" style="top:584.81px;font-size:17px;line-height:24px;color:#111;left:913.00px;width:300px;text-align:center;"><span><span style="letter-spacing:0.62px">$350</span></span></div>
<div class="t" style="top:584.81px;font-size:17px;line-height:24px;color:#111;left:1008.00px;width:300px;text-align:center;"><span><span style="letter-spacing:0.62px">$350</span></span></div>
<div class="t" style="top:584.81px;font-size:17px;line-height:24px;color:#111;left:1123.50px;width:300px;text-align:center;"><span><span style="letter-spacing:0.12px">已寄</span></span></div>
<div class="t" style="top:618.81px;font-size:17px;line-height:24px;color:#111;left:-46.20px;width:300px;text-align:center;"><span><span style="letter-spacing:0.62px">00008</span></span></div>
<div class="t" style="top:618.81px;font-size:17px;line-height:24px;color:#111;left:102.00px;width:300px;text-align:center;"><span><span style="letter-spacing:1.05px">10/13/2024</span></span></div>
<div class="t" style="top:618.81px;font-size:17px;line-height:24px;color:#111;left:477.50px;width:300px;text-align:center;"><span><span style="letter-spacing:0.12px">毛衛衣</span><span style="letter-spacing:0.62px">-</span><span style="letter-spacing:-0.1px">MELODY</span><span style="letter-spacing:0.62px">80-</span></span></div>
<div class="t" style="top:618.81px;font-size:17px;line-height:24px;color:#111;left:818.00px;width:300px;text-align:center;"><span><span style="letter-spacing:0.62px">1</span></span></div>
<div class="t" style="top:618.81px;font-size:17px;line-height:24px;color:#111;left:913.00px;width:300px;text-align:center;"><span><span style="letter-spacing:0.62px">$69</span></span></div>
<div class="t" style="top:618.81px;font-size:17px;line-height:24px;color:#111;left:1008.00px;width:300px;text-align:center;"><span><span style="letter-spacing:0.62px">$69</span></span></div>
<div class="t" style="top:618.81px;font-size:17px;line-height:24px;color:#111;left:1123.50px;width:300px;text-align:center;"><span><span style="letter-spacing:0.12px">預訂</span><span style="letter-spacing:-0.1px"> </span><span style="letter-spacing:0.62px">-</span><span style="letter-spacing:-0.1px"> </span><span style="letter-spacing:0.12px">未到貨</span></span></div>
<div class="t" style="top:652.81px;font-size:17px;line-height:24px;color:#111;left:-46.20px;width:300px;text-align:center;"><span><span style="letter-spacing:0.62px">00009</span></span></div>
<div class="t" style="top:652.81px;font-size:17px;line-height:24px;color:#111;left:102.00px;width:300px;text-align:center;"><span><span style="letter-spacing:1.05px">10/13/2024</span></span></div>
<div class="t" style="top:652.81px;font-size:17px;line-height:24px;color:#111;left:477.50px;width:300px;text-align:center;"><span><span style="letter-spacing:-0.1px">NF </span><span style="letter-spacing:0.12px">被</span><span style="letter-spacing:0.62px">-</span><span style="letter-spacing:0.12px">黑</span><span style="letter-spacing:0.62px">-</span></span></div>
<div class="t" style="top:652.81px;font-size:17px;line-height:24px;color:#111;left:818.00px;width:300px;text-align:center;"><span><span style="letter-spacing:0.62px">1</span></span></div>
<div class="t" style="top:652.81px;font-size:17px;line-height:24px;color:#111;left:913.00px;width:300px;text-align:center;"><span><span style="letter-spacing:0.62px">$0</span></span></div>
<div class="t" style="top:652.81px;font-size:17px;line-height:24px;color:#111;left:1008.00px;width:300px;text-align:center;"><span><span style="letter-spacing:0.62px">$0</span></span></div>
<div class="t" style="top:652.81px;font-size:17px;line-height:24px;color:#111;left:1123.50px;width:300px;text-align:center;"><span><span style="letter-spacing:0.12px">預訂</span><span style="letter-spacing:-0.1px"> </span><span style="letter-spacing:0.62px">-</span><span style="letter-spacing:-0.1px"> </span><span style="letter-spacing:0.12px">未到貨</span></span></div>
<div class="t" style="top:686.81px;font-size:17px;line-height:24px;color:#111;left:-46.20px;width:300px;text-align:center;"><span><span style="letter-spacing:0.62px">00009</span></span></div>
<div class="t" style="top:686.81px;font-size:17px;line-height:24px;color:#111;left:102.00px;width:300px;text-align:center;"><span><span style="letter-spacing:1.05px">10/13/2024</span></span></div>
<div class="t" style="top:686.81px;font-size:17px;line-height:24px;color:#111;left:477.50px;width:300px;text-align:center;"><span><span style="letter-spacing:0.12px">豬仔</span><span style="letter-spacing:0.62px">-</span><span style="letter-spacing:0.12px">包</span><span style="letter-spacing:0.62px">70-</span></span></div>
<div class="t" style="top:686.81px;font-size:17px;line-height:24px;color:#111;left:818.00px;width:300px;text-align:center;"><span><span style="letter-spacing:0.62px">1</span></span></div>
<div class="t" style="top:686.81px;font-size:17px;line-height:24px;color:#111;left:913.00px;width:300px;text-align:center;"><span><span style="letter-spacing:0.62px">$0</span></span></div>
<div class="t" style="top:686.81px;font-size:17px;line-height:24px;color:#111;left:1008.00px;width:300px;text-align:center;"><span><span style="letter-spacing:0.62px">$0</span></span></div>
<div class="t" style="top:686.81px;font-size:17px;line-height:24px;color:#111;left:1123.50px;width:300px;text-align:center;"><span><span style="letter-spacing:0.12px">預訂</span><span style="letter-spacing:-0.1px"> </span><span style="letter-spacing:0.62px">-</span><span style="letter-spacing:-0.1px"> </span><span style="letter-spacing:0.12px">未到貨</span></span></div>
<div class="t" style="top:720.81px;font-size:17px;line-height:24px;color:#111;left:-46.20px;width:300px;text-align:center;"><span><span style="letter-spacing:0.62px">00011</span></span></div>
<div class="t" style="top:720.81px;font-size:17px;line-height:24px;color:#111;left:102.00px;width:300px;text-align:center;"><span><span style="letter-spacing:1.05px">10/13/2024</span></span></div>
<div class="t" style="top:720.81px;font-size:17px;line-height:24px;color:#111;left:477.50px;width:300px;text-align:center;"><span><span style="letter-spacing:-0.1px">NF </span><span style="letter-spacing:0.12px">熊仔外套</span><span style="letter-spacing:0.62px">-</span><span style="letter-spacing:0.12px">白</span><span style="letter-spacing:0.62px">100-</span></span></div>
<div class="t" style="top:720.81px;font-size:17px;line-height:24px;color:#111;left:818.00px;width:300px;text-align:center;"><span><span style="letter-spacing:0.62px">1</span></span></div>
<div class="t" style="top:720.81px;font-size:17px;line-height:24px;color:#111;left:913.00px;width:300px;text-align:center;"><span><span style="letter-spacing:0.62px">$0</span></span></div>
<div class="t" style="top:720.81px;font-size:17px;line-height:24px;color:#111;left:1008.00px;width:300px;text-align:center;"><span><span style="letter-spacing:0.62px">$0</span></span></div>
<div class="t" style="top:720.81px;font-size:17px;line-height:24px;color:#111;left:1123.50px;width:300px;text-align:center;"><span><span style="letter-spacing:0.12px">預訂</span><span style="letter-spacing:-0.1px"> </span><span style="letter-spacing:0.62px">-</span><span style="letter-spacing:-0.1px"> </span><span style="letter-spacing:0.12px">未到貨</span></span></div>
<div class="t" style="top:754.81px;font-size:17px;line-height:24px;color:#111;left:-46.20px;width:300px;text-align:center;"><span><span style="letter-spacing:0.62px">00012</span></span></div>
<div class="t" style="top:754.81px;font-size:17px;line-height:24px;color:#111;left:102.00px;width:300px;text-align:center;"><span><span style="letter-spacing:1.05px">10/13/2024</span></span></div>
<div class="t" style="top:754.81px;font-size:17px;line-height:24px;color:#111;left:477.50px;width:300px;text-align:center;"><span><span style="letter-spacing:0.12px">三合一</span><span style="letter-spacing:0.62px">-</span><span style="letter-spacing:0.12px">粉</span><span style="letter-spacing:0.62px">90-</span></span></div>
<div class="t" style="top:754.81px;font-size:17px;line-height:24px;color:#111;left:818.00px;width:300px;text-align:center;"><span><span style="letter-spacing:0.62px">1</span></span></div>
<div class="t" style="top:754.81px;font-size:17px;line-height:24px;color:#111;left:913.00px;width:300px;text-align:center;"><span><span style="letter-spacing:0.62px">$139</span></span></div>
<div class="t" style="top:754.81px;font-size:17px;line-height:24px;color:#111;left:1008.00px;width:300px;text-align:center;"><span><span style="letter-spacing:0.62px">$139</span></span></div>
<div class="t" style="top:754.81px;font-size:17px;line-height:24px;color:#111;left:1123.50px;width:300px;text-align:center;"><span><span style="letter-spacing:0.12px">已寄</span></span></div>
<div class="t" style="top:788.81px;font-size:17px;line-height:24px;color:#111;left:-46.20px;width:300px;text-align:center;"><span><span style="letter-spacing:0.62px">00013</span></span></div>
<div class="t" style="top:788.81px;font-size:17px;line-height:24px;color:#111;left:102.00px;width:300px;text-align:center;"><span><span style="letter-spacing:1.05px">10/13/2024</span></span></div>
<div class="t" style="top:788.81px;font-size:17px;line-height:24px;color:#111;left:477.50px;width:300px;text-align:center;"><span><span style="letter-spacing:-0.1px">NF </span><span style="letter-spacing:0.12px">熊仔外套</span><span style="letter-spacing:0.62px">-</span><span style="letter-spacing:0.12px">白</span><span style="letter-spacing:0.62px">90-</span></span></div>
<div class="t" style="top:788.81px;font-size:17px;line-height:24px;color:#111;left:818.00px;width:300px;text-align:center;"><span><span style="letter-spacing:0.62px">1</span></span></div>
<div class="t" style="top:788.81px;font-size:17px;line-height:24px;color:#111;left:913.00px;width:300px;text-align:center;"><span><span style="letter-spacing:0.62px">$0</span></span></div>
<div class="t" style="top:788.81px;font-size:17px;line-height:24px;color:#111;left:1008.00px;width:300px;text-align:center;"><span><span style="letter-spacing:0.62px">$0</span></span></div>
<div class="t" style="top:788.81px;font-size:17px;line-height:24px;color:#111;left:1123.50px;width:300px;text-align:center;"><span><span style="letter-spacing:0.12px">預訂</span><span style="letter-spacing:-0.1px"> </span><span style="letter-spacing:0.62px">-</span><span style="letter-spacing:-0.1px"> </span><span style="letter-spacing:0.12px">未到貨</span></span></div>
<div class="t" style="top:822.81px;font-size:17px;line-height:24px;color:#111;left:-46.20px;width:300px;text-align:center;"><span><span style="letter-spacing:0.62px">00014</span></span></div>
<div class="t" style="top:822.81px;font-size:17px;line-height:24px;color:#111;left:102.00px;width:300px;text-align:center;"><span><span style="letter-spacing:1.05px">10/13/2024</span></span></div>
<div class="t" style="top:822.81px;font-size:17px;line-height:24px;color:#111;left:477.50px;width:300px;text-align:center;"><span><span style="letter-spacing:-0.1px">POLO</span><span style="letter-spacing:0.12px">純色連身裙</span><span style="letter-spacing:0.62px">-</span><span style="letter-spacing:0.12px">藍</span><span style="letter-spacing:0.62px">100-</span></span></div>
<div class="t" style="top:822.81px;font-size:17px;line-height:24px;color:#111;left:818.00px;width:300px;text-align:center;"><span><span style="letter-spacing:0.62px">1</span></span></div>
<div class="t" style="top:822.81px;font-size:17px;line-height:24px;color:#111;left:913.00px;width:300px;text-align:center;"><span><span style="letter-spacing:0.62px">$0</span></span></div>
<div class="t" style="top:822.81px;font-size:17px;line-height:24px;color:#111;left:1008.00px;width:300px;text-align:center;"><span><span style="letter-spacing:0.62px">$0</span></span></div>
<div class="t" style="top:822.81px;font-size:17px;line-height:24px;color:#111;left:1123.50px;width:300px;text-align:center;"><span><span style="letter-spacing:0.12px">預訂</span><span style="letter-spacing:-0.1px"> </span><span style="letter-spacing:0.62px">-</span><span style="letter-spacing:-0.1px"> </span><span style="letter-spacing:0.12px">未到貨</span></span></div>
<div class="t" style="top:856.81px;font-size:17px;line-height:24px;color:#111;left:-46.20px;width:300px;text-align:center;"><span><span style="letter-spacing:0.62px">00014</span></span></div>
<div class="t" style="top:856.81px;font-size:17px;line-height:24px;color:#111;left:102.00px;width:300px;text-align:center;"><span><span style="letter-spacing:1.05px">10/13/2024</span></span></div>
<div class="t" style="top:856.81px;font-size:17px;line-height:24px;color:#111;left:477.50px;width:300px;text-align:center;"><span><span style="letter-spacing:-0.1px">POLO</span><span style="letter-spacing:0.12px">條紋裙</span><span style="letter-spacing:0.62px">-100-</span></span></div>
<div class="t" style="top:856.81px;font-size:17px;line-height:24px;color:#111;left:818.00px;width:300px;text-align:center;"><span><span style="letter-spacing:0.62px">1</span></span></div>
<div class="t" style="top:856.81px;font-size:17px;line-height:24px;color:#111;left:913.00px;width:300px;text-align:center;"><span><span style="letter-spacing:0.62px">$0</span></span></div>
<div class="t" style="top:856.81px;font-size:17px;line-height:24px;color:#111;left:1008.00px;width:300px;text-align:center;"><span><span style="letter-spacing:0.62px">$0</span></span></div>
<div class="t" style="top:856.81px;font-size:17px;line-height:24px;color:#111;left:1123.50px;width:300px;text-align:center;"><span><span style="letter-spacing:0.12px">預訂</span><span style="letter-spacing:-0.1px"> </span><span style="letter-spacing:0.62px">-</span><span style="letter-spacing:-0.1px"> </span><span style="letter-spacing:0.12px">未到貨</span></span></div>
<div class="t" style="top:890.81px;font-size:17px;line-height:24px;color:#111;left:-46.20px;width:300px;text-align:center;"><span><span style="letter-spacing:0.62px">00016</span></span></div>
<div class="t" style="top:890.81px;font-size:17px;line-height:24px;color:#111;left:102.00px;width:300px;text-align:center;"><span><span style="letter-spacing:1.05px">10/13/2024</span></span></div>
<div class="t" style="top:890.81px;font-size:17px;line-height:24px;color:#111;left:477.50px;width:300px;text-align:center;"><span><span style="letter-spacing:-0.1px">NF </span><span style="letter-spacing:0.12px">熊仔外套</span><span style="letter-spacing:0.62px">-</span><span style="letter-spacing:0.12px">白</span><span style="letter-spacing:0.62px">90-</span></span></div>
<div class="t" style="top:890.81px;font-size:17px;line-height:24px;color:#111;left:818.00px;width:300px;text-align:center;"><span><span style="letter-spacing:0.62px">1</span></span></div>
<div class="t" style="top:890.81px;font-size:17px;line-height:24px;color:#111;left:913.00px;width:300px;text-align:center;"><span><span style="letter-spacing:0.62px">$0</span></span></div>
<div class="t" style="top:890.81px;font-size:17px;line-height:24px;color:#111;left:1008.00px;width:300px;text-align:center;"><span><span style="letter-spacing:0.62px">$0</span></span></div>
<div class="t" style="top:890.81px;font-size:17px;line-height:24px;color:#111;left:1123.50px;width:300px;text-align:center;"><span><span style="letter-spacing:0.12px">預訂</span><span style="letter-spacing:-0.1px"> </span><span style="letter-spacing:0.62px">-</span><span style="letter-spacing:-0.1px"> </span><span style="letter-spacing:0.12px">未到貨</span></span></div>
<div class="t" style="top:924.81px;font-size:17px;line-height:24px;color:#111;left:-46.20px;width:300px;text-align:center;"><span><span style="letter-spacing:0.62px">17</span></span></div>
<div class="t" style="top:924.81px;font-size:17px;line-height:24px;color:#111;left:102.00px;width:300px;text-align:center;"><span><span style="letter-spacing:1.05px">10/13/2024</span></span></div>
<div class="t" style="top:924.81px;font-size:17px;line-height:24px;color:#111;left:477.50px;width:300px;text-align:center;"><span><span style="letter-spacing:-0.1px">MELODY</span><span style="letter-spacing:0.12px">紅白衛衣</span><span style="letter-spacing:0.62px">-80-</span></span></div>
<div class="t" style="top:924.81px;font-size:17px;line-height:24px;color:#111;left:818.00px;width:300px;text-align:center;"><span><span style="letter-spacing:0.62px">1</span></span></div>
<div class="t" style="top:924.81px;font-size:17px;line-height:24px;color:#111;left:913.00px;width:300px;text-align:center;"><span><span style="letter-spacing:0.62px">$0</span></span></div>
<div class="t" style="top:924.81px;font-size:17px;line-height:24px;color:#111;left:1008.00px;width:300px;text-align:center;"><span><span style="letter-spacing:0.62px">$0</span></span></div>
<div class="t" style="top:924.81px;font-size:17px;line-height:24px;color:#111;left:1123.50px;width:300px;text-align:center;"><span><span style="letter-spacing:0.12px">已寄</span></span></div>
<div class="t" style="top:958.81px;font-size:17px;line-height:24px;color:#111;left:-46.20px;width:300px;text-align:center;"><span><span style="letter-spacing:0.62px">17</span></span></div>
<div class="t" style="top:958.81px;font-size:17px;line-height:24px;color:#111;left:102.00px;width:300px;text-align:center;"><span><span style="letter-spacing:1.05px">10/13/2024</span></span></div>
<div class="t" style="top:958.81px;font-size:17px;line-height:24px;color:#111;left:477.50px;width:300px;text-align:center;"><span><span style="letter-spacing:-0.1px">MELODY</span><span style="letter-spacing:0.12px">紅白衛衣</span><span style="letter-spacing:0.62px">-90-</span></span></div>
<div class="t" style="top:958.81px;font-size:17px;line-height:24px;color:#111;left:818.00px;width:300px;text-align:center;"><span><span style="letter-spacing:0.62px">1</span></span></div>
<div class="t" style="top:958.81px;font-size:17px;line-height:24px;color:#111;left:1027.60px;width:80px;text-align:right;"><span>0</span></div>
<div class="t" style="top:958.81px;font-size:17px;line-height:24px;color:#111;left:1122.60px;width:80px;text-align:right;"><span>0</span></div>
<div class="t" style="top:958.81px;font-size:17px;line-height:24px;color:#111;left:1123.50px;width:300px;text-align:center;"><span><span style="letter-spacing:0.12px">已寄</span></span></div>
<div class="b" style="left:1766px;top:250px;width:19px;height:734px;background:#595959;"></div>
<div class="b" style="left:1766px;top:250px;width:19px;height:19px;background:#9b9b9b;border:1px solid #525252;"></div>
<div class="b" style="left:1766px;top:269px;width:19px;height:21px;background:#9b9b9b;border:1px solid #525252;"></div>
<div class="b" style="left:1766px;top:965px;width:19px;height:19px;background:#9b9b9b;border:1px solid #525252;"></div>
<div class="b" style="left:1px;top:984px;width:1788px;height:29px;background:#666666;"></div>
<div class="b" style="left:104px;top:988px;width:1px;height:21px;background:#979797;"></div>
<div class="b" style="left:162px;top:988px;width:1px;height:21px;background:#979797;"></div>
<div class="b" style="left:236px;top:988px;width:1px;height:21px;background:#979797;"></div>
<div class="b" style="left:478px;top:988px;width:1px;height:21px;background:#979797;"></div>
<div class="b" style="left:537px;top:988px;width:1px;height:21px;background:#979797;"></div>
<div class="b" style="left:606px;top:988px;width:1px;height:21px;background:#979797;"></div>
<div class="b" style="left:691px;top:988px;width:1px;height:21px;background:#979797;"></div>
<div class="b" style="left:749px;top:988px;width:1px;height:21px;background:#979797;"></div>
<div class="b" style="left:841px;top:988px;width:1px;height:21px;background:#979797;"></div>
<div class="b" style="left:958px;top:988px;width:1px;height:21px;background:#979797;"></div>
<div class="b" style="left:295px;top:984px;width:110px;height:24px;background:#ffffff;"></div>
<div class="b" style="left:298px;top:985px;width:104px;height:22px;background:linear-gradient(#ffffff 8%,#ffd9d9 45%,#ff9f9f 100%);"></div>
<div class="b" style="left:295px;top:1008px;width:110px;height:2px;background:#1e7145;"></div>
<div class="b" style="left:407px;top:987px;width:70px;height:23px;background:#ff0000;"></div>
<div class="t" style="top:984.32px;font-size:16.4px;line-height:23px;color:#e6e6e6;letter-spacing:0.359px;left:116.40px;"><span>訂單</span></div>
<div class="t" style="top:984.32px;font-size:16.4px;line-height:23px;color:#e6e6e6;letter-spacing:0.409px;left:174.40px;"><span>入貨單</span></div>
<div class="t" style="top:984.32px;font-size:16.4px;line-height:23px;color:#e6e6e6;letter-spacing:0.209px;left:249.40px;"><span>商品</span></div>
<div class="t" style="top:984.32px;font-size:16.4px;line-height:23px;color:#1e7145;letter-spacing:0.489px;left:307.40px;-webkit-text-stroke:.35px #1e7145;"><span>訂貨資料庫</span></div>
<div class="t" style="top:984.32px;font-size:16.4px;line-height:23px;color:#ffffff;letter-spacing:0.443px;left:416.10px;"><span>資料庫</span></div>
<div class="t" style="top:984.32px;font-size:16.4px;line-height:23px;color:#e6e6e6;letter-spacing:0.359px;left:491.10px;"><span>客戶</span></div>
<div class="t" style="top:984.32px;font-size:16.4px;line-height:23px;color:#e6e6e6;letter-spacing:-0.412px;left:549.40px;"><span>SEND</span></div>
<div class="t" style="top:984.32px;font-size:16.4px;line-height:23px;color:#e6e6e6;letter-spacing:0.476px;left:618.70px;"><span>工作表4</span></div>
<div class="t" style="top:984.32px;font-size:16.4px;line-height:23px;color:#e6e6e6;letter-spacing:0.209px;left:703.40px;"><span>訂貨</span></div>
<div class="t" style="top:984.32px;font-size:16.4px;line-height:23px;color:#e6e6e6;letter-spacing:0.559px;left:761.10px;"><span>庫存計算</span></div>
<div class="t" style="top:984.32px;font-size:16.4px;line-height:23px;color:#e6e6e6;letter-spacing:-0.238px;left:855.40px;"><span>SIMBA LIST</span></div>
<div class="t" style="top:984.32px;font-size:16.4px;line-height:23px;color:#e6e6e6;letter-spacing:-0.376px;left:971.10px;clip-path:inset(0 3px 0 0);"><span>SIN</span></div>
<div class="t" style="top:984.32px;font-size:16.4px;line-height:23px;color:#e6e6e6;letter-spacing:-0.291px;left:1002.10px;"><span>...</span></div>
<div class="b" style="left:1065px;top:992px;width:3px;height:3px;background:#f0f0f0;"></div>
<div class="b" style="left:1065px;top:997px;width:3px;height:3px;background:#f0f0f0;"></div>
<div class="b" style="left:1065px;top:1002px;width:3px;height:3px;background:#f0f0f0;"></div>
<div class="b" style="left:1083px;top:989px;width:679px;height:19px;background:#595959;"></div>
<div class="b" style="left:1083px;top:989px;width:19px;height:19px;background:#9b9b9b;border:1px solid #525252;"></div>
<div class="b" style="left:1102px;top:989px;width:584px;height:19px;background:#9b9b9b;border:1px solid #525252;"></div>
<div class="b" style="left:1743px;top:989px;width:19px;height:19px;background:#9b9b9b;border:1px solid #525252;"></div>
<div class="b" style="left:1px;top:1013px;width:1788px;height:29px;background:#666666;"></div>
<div class="b" style="left:1px;top:1013px;width:1788px;height:1px;background:#4f4f4f;"></div>
<div class="b" style="left:0px;top:1041px;width:1789px;height:1px;background:#8a8a8a;"></div>
<div class="t" style="top:1019.54px;font-size:12.3px;line-height:17px;color:#f0f0f0;letter-spacing:0.251px;left:7.70px;"><span>Ready</span></div>
<div class="b" style="left:1438px;top:1014px;width:42px;height:27px;background:#474747;"></div>
<div class="b" style="left:1569px;top:1026px;width:10px;height:2.6px;background:#e4e4e4;"></div>
<div class="b" style="left:1583px;top:1027px;width:125px;height:1px;background:#e8e8e8;"></div>
<div class="b" style="left:1643px;top:1020px;width:6px;height:15px;background:#f2f2f2;"></div>
<div class="t" style="top:1020.04px;font-size:12.3px;line-height:17px;color:#f0f0f0;letter-spacing:-0.063px;left:1734.40px;"><span>100%</span></div>
<div class="b" style="left:0px;top:1042px;width:1800px;height:38px;background:#1b1b1b;"></div>
<div class="b" style="left:540px;top:1042px;width:64px;height:38px;background:#3b7a31;"></div>
<div class="b" style="left:604px;top:1042px;width:60px;height:38px;background:#333333;"></div>
<div class="b" style="left:540px;top:1077px;width:124px;height:3px;background:#38e038;"></div>
<div class="b" style="left:270px;top:1077px;width:113px;height:3px;background:#76b9ed;"></div>
<div class="b" style="left:384px;top:1077px;width:9.5px;height:3px;background:#5b8db8;"></div>
<div class="b" style="left:405px;top:1077px;width:113.5px;height:3px;background:#76b9ed;"></div>
<div class="b" style="left:519.5px;top:1077px;width:9.5px;height:3px;background:#5b8db8;"></div>
<div class="b" style="left:675px;top:1077px;width:122.5px;height:3px;background:#76b9ed;"></div>
<div class="b" style="left:810px;top:1077px;width:112.5px;height:3px;background:#76b9ed;"></div>
<div class="b" style="left:923.5px;top:1077px;width:10.0px;height:3px;background:#5b8db8;"></div>
<div class="b" style="left:945px;top:1077px;width:113px;height:3px;background:#76b9ed;"></div>
<div class="b" style="left:1059px;top:1077px;width:8px;height:3px;background:#5b8db8;"></div>
<div class="b" style="left:1079px;top:1077px;width:123px;height:3px;background:#76b9ed;"></div>
<div class="t" style="top:1050.30px;font-size:15px;line-height:21px;color:#f2f2f2;letter-spacing:-0.317px;left:296.90px;"><span>Visual Studi...</span></div>
<div class="t" style="top:1050.30px;font-size:15px;line-height:21px;color:#f2f2f2;letter-spacing:-0.154px;left:431.70px;"><span>File Explorer</span></div>
<div class="t" style="top:1050.30px;font-size:15px;line-height:21px;color:#f2f2f2;letter-spacing:-0.258px;left:566.10px;"><span>Core Temp 1...</span></div>
<div class="t" style="top:1050.30px;font-size:15px;line-height:21px;color:#f2f2f2;letter-spacing:0.171px;left:701.70px;"><span>Station</span></div>
<div class="t" style="top:1050.30px;font-size:15px;line-height:21px;color:#f2f2f2;letter-spacing:-0.473px;left:837.10px;"><span>測試員 (02_t...</span></div>
<div class="t" style="top:1050.30px;font-size:15px;line-height:21px;color:#f2f2f2;letter-spacing:-0.417px;left:971.70px;"><span>Excel</span></div>
<div class="t" style="top:1050.30px;font-size:15px;line-height:21px;color:#f2f2f2;letter-spacing:0.068px;left:1105.40px;"><span>\\wsl.localh...</span></div>
<div class="t" style="top:1052.20px;font-size:13px;line-height:18px;color:#f2d21f;letter-spacing:0.566px;left:1262.70px;"><span>53</span></div>
<div class="t" style="top:1052.20px;font-size:13px;line-height:18px;color:#c9c9c9;letter-spacing:0.216px;left:1303.40px;"><span>49</span></div>
<div class="t" style="top:1052.20px;font-size:13px;line-height:18px;color:#c9c9c9;letter-spacing:-0.284px;left:1343.40px;"><span>21</span></div>
<div class="t" style="top:1051.15px;font-size:14px;line-height:20px;color:#f2f2f2;letter-spacing:-0.248px;left:1738.70px;"><span>ENG</span></div>
<div class="t" style="top:1050.30px;font-size:15px;line-height:21px;color:#f2f2f2;letter-spacing:-0.744px;left:1785.10px;"><span>10</span></div>
<div class="b" style="left:1788px;top:0px;width:1px;height:1042px;background:#858585;"></div>
<svg width="1800" height="1080" viewBox="0 0 1800 1080">
<path d="M29 14h16v16h-16z M31 16v5h12v-5z M33 24v4h8v-4z" fill="#f2f2f2" fill-rule="evenodd"/><rect x="35" y="25" width="2.5" height="3" fill="#f2f2f2"/>
<path d="M65.3 20.600l6.800 -6v4.200h4.200a6.700 5.500 0 0 1 0 11h-3.600v-2.900h3.400a3.500 2.600 0 0 0 0 -5.200h-4v4.800z" fill="#f2f2f2"/>
<path d="M90.8 18.9h6.4l-3.2 3.2z" fill="#f2f2f2"/>
<path d="M126.500 20.600l-6.800 -6v4.200h-4.200a6.700 5.500 0 0 0 0 11h3.600v-2.900h-3.400a3.500 2.600 0 0 1 0 -5.200h4v4.800z" fill="#7e7e7e"/>
<path d="M134.8 18.9h6.4l-3.2 3.2z" fill="#808080"/>
<path d="M154.5 14.2a2.3 2.3 0 0 1 4.6 0v7.2l3.2 .8q1.2 .4 1 1.8l-.8 6h-7.6l-4.6 -6.2q-.6 -1.3 .6 -1.8t2 .5l1.6 1.7z" fill="#f2f2f2"/><path d="M152.6 17.6a4.5 4.5 0 1 1 8.4 0" fill="none" stroke="#f2f2f2" stroke-width="1.3"/>
<path d="M173.8 18.9h6.4l-3.2 3.2z" fill="#f2f2f2"/>
<rect x="198.5" y="17.6" width="6" height="1.4" fill="#f2f2f2"/>
<path d="M198.5 21.1h6l-3.0 3z" fill="#f2f2f2"/>
<g fill="none" stroke="#2a2a2a" stroke-width="1.1"><rect x="1580.5" y="14.5" width="14" height="11"/><path d="M1580 17.5h15M1587.5 24v-5.5M1584.5 21.2l3 -3l3 3"/><path d="M1639.5 19.5h12"/><rect x="1696.5" y="14.5" width="11" height="11"/><path d="M1753.3 14.3l11.4 11.4M1764.7 14.3l-11.4 11.4"/></g>
<g fill="none" stroke="#505050" stroke-width="1.200"><path d="M828.300 67v-2.400q-3.600 -2.600 -3.600 -6a6.600 6.600 0 0 1 13.200 0q0 3.400 -3.600 6v2.400z"/><path d="M828.300 69.400h6M829.300 71.600h4"/></g>
<g fill="none" stroke="#f4f4f4" stroke-width="1.300"><circle cx="1713" cy="59.900" r="5.200"/><path d="M1705.400 72.300q1 -7.400 9.400 -7.400M1718.300 64.200v9M1713.900 68.600h9"/></g>
<rect x="16" y="94" width="27" height="31" rx="1.500" fill="#e8bb67"/><path d="M21 98v-4.200q0 -1 1 -1h4v-1.600q0 -1.200 1.200 -1.200h4.600q1.200 0 1.200 1.200v1.600h4q1 0 1 1v4.200z" fill="#4a4a4a"/><rect x="27.800" y="92" width="3.300" height="2.600" fill="#a0a0a0"/><path d="M35.500 108.500h9.500l4.500 4.500v14h-14z" fill="#fff" stroke="#4a4a4a" stroke-width="1"/><path d="M45 108.500v4.500h4.500" fill="none" stroke="#4a4a4a" stroke-width="1"/>
<path d="M27.0 158.0h6l-3.0 3z" fill="#444444"/>
<path d="M62.300 90.300q1.400 6 8.200 11.700M71.700 90.300q-1.400 6 -8.200 11.700" stroke="#444444" stroke-width="2" fill="none"/><circle cx="62.400" cy="104.600" r="2.700" fill="none" stroke="#2e67a7" stroke-width="1.300"/><circle cx="71.700" cy="104.600" r="2.700" fill="none" stroke="#2e67a7" stroke-width="1.300"/>
<path d="M59.500 118.500h6l3 3v9.500h-9z" fill="#fff" stroke="#444444"/><path d="M65.500 118.500v3h3" fill="none" stroke="#444444" stroke-width=".8"/><path d="M66.500 123.500h6l3.500 3.500v8.500h-9.500z" fill="#fff" stroke="#444444"/><path d="M72.500 123.500v3.500h3.500" fill="none" stroke="#444444" stroke-width=".8"/><path d="M61 122.500h3M61 125.500h3.500M61 128.500h3.500M68.500 128.500h3M68.500 131.500h5.500M68.500 133.700h5.500" stroke="#2e67a7" stroke-width="1"/>
<path d="M125.0 125.0h6l-3.0 3z" fill="#444444"/>
<path d="M59.500 154.500L66 152L71.300 156.800L66.500 162Z" fill="#e8bb67"/><path d="M67.300 150.700L73.500 156.200" stroke="#4a4a4a" stroke-width="2.700"/><path d="M72.200 151.900L76 148.300" stroke="#4a4a4a" stroke-width="3.800"/>
<path d="M181.2 179.5h-7v7" fill="none" stroke="#444444" stroke-width="1.100"/><path d="M177.2 182.2l4 4" fill="none" stroke="#444444" stroke-width="1.300"/><path d="M182.8 187.8v-4.200l-4.200 4.200z" fill="#444444"/>
<path d="M296.0 107.2h6l-3.0 3z" fill="#444444"/>
<path d="M356.0 107.2h6l-3.0 3z" fill="#444444"/>
<path d="M383.200 101.800l2.800 -2.800l2.800 2.800z" fill="#2e67a7"/>
<path d="M408.600 99.600h5.600l-2.800 2.700z" fill="#2e67a7"/>
<path d="M274.0 144.0h6l-3.0 3z" fill="#444444"/>
<rect x="297" y="137" width="17" height="16.4" fill="#fff"/><path d="M297.5 137.5h16.5M297.5 153h16.5M297.5 145.3h16.5M297.5 137v16.5M313.5 137v16.5M305.5 137v16.5" stroke="#333" stroke-width="1" stroke-dasharray="1 1" fill="none"/>
<path d="M321.7 144.0h6l-3.0 3z" fill="#444444"/>
<path d="M349 144.5l6.2 -6l6.2 6.2l-6.2 6z" fill="#fff" stroke="#444444" stroke-width="1.1"/><path d="M352.6 141v-3.2a1.7 1.7 0 0 1 3.4 0v1" fill="none" stroke="#444444" stroke-width="1"/><path d="M361.2 142.5q2.4 1.8 1.6 6q-1.8 -2.6 -3 -4z" fill="#2e67a7"/>
<path d="M370.0 144.0h6l-3.0 3z" fill="#444444"/>
<path d="M409.2 144.0h6l-3.0 3z" fill="#444444"/>
<path d="M416.7 179.5h-7v7" fill="none" stroke="#444444" stroke-width="1.100"/><path d="M412.7 182.2l4 4" fill="none" stroke="#444444" stroke-width="1.300"/><path d="M418.3 187.8v-4.200l-4.200 4.200z" fill="#444444"/>
<path d="M432 100.5H450M434 103.5H448M432 106.5H450" stroke="#444444" stroke-width="1.1" fill="none"/>
<path d="M458 104.5H476M460 107.5H474M458 110.5H476M460 113.5H474" stroke="#444444" stroke-width="1.1" fill="none"/>
<path d="M484 108.5H502M486 111.5H500M484 114.5H502M486 117.5H500" stroke="#444444" stroke-width="1.1" fill="none"/>
<path d="M433.5 141.5H448M433.5 144.5H445M433.5 147.5H448M433.5 150.5H445" stroke="#444444" stroke-width="1.1" fill="none"/>
<path d="M459 141.5H475M462 144.5H472M459 147.5H475M462 150.5H472" stroke="#444444" stroke-width="1.1" fill="none"/>
<path d="M486 141.5H500.5M489 144.5H500.5M486 147.5H500.5M489 150.5H500.5" stroke="#444444" stroke-width="1.1" fill="none"/>
<text transform="translate(523.200 115.200) rotate(-45)" font-size="13.500" font-family="Liberation Sans,sans-serif" fill="#444444">ab</text><path d="M526.200 116.600L536.700 106.300M532.600 106.200h4.300v4.300" fill="none" stroke="#444444" stroke-width="1.300"/>
<path d="M542.2 107.2h6l-3.0 3z" fill="#444444"/>
<text x="581.200" y="108.800" font-size="12" font-family="Liberation Sans,sans-serif" fill="#3a3a3a" stroke="#3a3a3a" stroke-width=".35">ab</text><text x="581.200" y="116.800" font-size="12" font-family="Liberation Sans,sans-serif" fill="#3a3a3a" stroke="#3a3a3a" stroke-width=".35">c</text><path d="M596.600 110.800q0 3.600 -3.200 3.600h-3.400M592.400 111.800l-2.700 2.600l2.700 2.600" fill="none" stroke="#2e67a7" stroke-width="1.300"/>
<path d="M519 138.5H537M519 153.5H537" stroke="#444444" stroke-width="1.1" fill="none"/>
<path d="M528.3 141.5H537M528.3 144.5H537M528.3 147.5H537M528.3 150.5H537" stroke="#444444" stroke-width="1.1" fill="none"/>
<path d="M545 138.5H563M545 153.5H563" stroke="#444444" stroke-width="1.1" fill="none"/>
<path d="M554.3 141.5H563M554.3 144.5H563M554.3 147.5H563M554.3 150.5H563" stroke="#444444" stroke-width="1.1" fill="none"/>
<path d="M527.500 146h-6M524.200 142l-4 4l4 4" fill="none" stroke="#2e67a7" stroke-width="2.300"/>
<path d="M545 146h6M548.400 142l4 4l-4 4" fill="none" stroke="#2e67a7" stroke-width="2.300"/>
<rect x="579.500" y="136.500" width="18" height="18" fill="#fff" stroke="#444444"/><path d="M579.500 140.500h18M579.500 150.500h18M588.500 136.500v4M588.500 150.500v4" stroke="#444444" fill="none"/><path d="M582 145.500h13M584.500 143l-2.500 2.500l2.500 2.500M592.500 143l2.500 2.500l-2.500 2.500" fill="none" stroke="#2e67a7" stroke-width="1.400"/>
<path d="M718.0 144.0h6l-3.0 3z" fill="#444444"/>
<path d="M726.2 179.5h-7v7" fill="none" stroke="#444444" stroke-width="1.100"/><path d="M722.2 182.2l4 4" fill="none" stroke="#444444" stroke-width="1.300"/><path d="M727.8 187.8v-4.200l-4.200 4.200z" fill="#444444"/>
<path d="M878.8 107.2h6l-3.0 3z" fill="#444444"/>
<path d="M766.7 144.0h6l-3.0 3z" fill="#444444"/>
<g font-family="Liberation Sans,sans-serif" font-size="9.800" fill="#3a3a3a" stroke="#3a3a3a" stroke-width=".3"><text x="850" y="144.800">.0</text><text x="844" y="154">.00</text><text x="871.300" y="144.800">.00</text><text x="876.700" y="154">.0</text></g><path d="M850.300 142h-6M846.600 139.200l-2.800 2.800l2.800 2.800" fill="none" stroke="#2e67a7" stroke-width="1.900"/><path d="M869 151h6M872.600 148.200l2.800 2.800l-2.800 2.800" fill="none" stroke="#2e67a7" stroke-width="1.900"/>
<path d="M887.7 179.5h-7v7" fill="none" stroke="#444444" stroke-width="1.100"/><path d="M883.7 182.2l4 4" fill="none" stroke="#444444" stroke-width="1.300"/><path d="M889.3 187.8v-4.200l-4.200 4.200z" fill="#444444"/>
<rect x="926.5" y="94.5" width="33" height="27" fill="#fff" stroke="#4a4a4a"/><path d="M926.5 101.500h33M926.5 108.500h33M926.5 115.500h33M936.500 94.500v27M949.500 94.500v27" stroke="#8a8a8a" fill="none"/><rect x="937" y="95" width="7" height="6" fill="#c9502c"/><rect x="937" y="102" width="11" height="6" fill="#2e67a7"/><rect x="937" y="109" width="9" height="6" fill="#c9502c"/><rect x="937" y="116" width="5" height="5" fill="#2e67a7"/><rect x="944.5" y="113.5" width="18" height="14" fill="#fff" stroke="#4a4a4a"/><path d="M948.5 118.3h10M948.5 122.7h10M956.5 115.5l-5.5 10" stroke="#222" stroke-width="1.1" fill="none"/>
<path d="M978.0 158.0h6l-3.0 3z" fill="#444444"/>
<rect x="1005.5" y="93.5" width="32" height="27.5" fill="#fff" stroke="#4a4a4a"/><rect x="1013.500" y="100.500" width="24" height="20.500" fill="#c3d6ec"/><path d="M1005.500 100.500h32M1005.500 107.500h32M1005.500 114.500h32M1013.5 93.5v27.5M1021.5 93.5v27.5M1029.5 93.5v27.5" stroke="#8a8a8a" fill="none"/><path d="M1041.5 101l1 8.5l-7 6.5l-3.5 -3.5z" fill="#4a4a4a"/><path d="M1031 113.5l3.5 3.5l-4.5 4.5l-3.5 -3.5z" fill="#6b6b6b"/><path d="M1015 127.5q4 -2 6 -7q3 -4.5 7 -1.500q3.500 3.500 -.5 6.500q-4 3 -12.500 2z" fill="#2e67a7"/><path d="M1024.500 119.500q2.500 -1.500 4 .5l-1.500 2.500z" fill="#fff"/>
<path d="M1038.3 158.0h6l-3.0 3z" fill="#444444"/>
<path d="M1332.5 103h6l-3 -3z" fill="#bdbdbd"/>
<path d="M1332.6 125.7h6.4l-3.2 3.2z" fill="#222"/>
<rect x="1332.5" y="148.500" width="6" height="1.300" fill="#444444"/>
<path d="M1332.5 152.0h6l-3.0 3z" fill="#444444"/>
<rect x="1366.5" y="91.5" width="18" height="6" fill="#fff" stroke="#4a4a4a"/><path d="M1375.5 91.5v6" stroke="#4a4a4a" fill="none"/>
<rect x="1366.5" y="113.5" width="18" height="12" fill="#fff" stroke="#4a4a4a"/><path d="M1375.5 113.5v12M1366.5 119.5h18" stroke="#4a4a4a" fill="none"/>
<rect x="1381.5" y="102.5" width="17" height="6" fill="#c3d6ec" stroke="#5c6670"/><path d="M1390.0 102.5v6" stroke="#5c6670" fill="none"/>
<path d="M1378 105.500h-12.500M1370.300 100.500l-5.200 5l5.200 5" fill="none" stroke="#2e67a7" stroke-width="2.900"/>
<path d="M1379.0 158.0h6l-3.0 3z" fill="#444444"/>
<rect x="1416.5" y="91.5" width="18" height="6" fill="#fff" stroke="#4a4a4a"/><path d="M1425.5 91.5v6" stroke="#4a4a4a" fill="none"/>
<rect x="1416.5" y="111.5" width="18" height="12" fill="#fff" stroke="#4a4a4a"/><path d="M1425.5 111.5v12M1416.5 117.5h18" stroke="#4a4a4a" fill="none"/>
<rect x="1423.5" y="101.5" width="17" height="6" fill="#c3d6ec" stroke="#5c6670"/><path d="M1432.0 101.5v6" stroke="#5c6670" fill="none"/>
<path d="M1434.500 98l16 13.500M1450.500 98.500q-9 4.500 -16 14" stroke="#c9502c" stroke-width="2.500" fill="none" stroke-linecap="round"/>
<path d="M1429.2 158.0h6l-3.0 3z" fill="#444444"/>
<path d="M1466.500 90v6M1493.500 90v6M1469 93h22M1471.500 90.500l-2.500 2.500l2.500 2.500M1488.500 90.500l2.500 2.500l-2.500 2.500" fill="none" stroke="#2e67a7" stroke-width="1.700"/>
<path d="M1466.500 98.500h33v24h-14l-2 3h-6v-3h-3l-2 3h-6z" fill="#fff" stroke="#4a4a4a"/><path d="M1466.500 104.500h33M1466.500 116.500h33M1474.500 98.500v24M1484.500 98.500v24M1492.500 98.500v24" stroke="#9a9a9a" fill="none"/><rect x="1475" y="105" width="9" height="11" fill="#2e67a7"/>
<path d="M1480.0 158.0h6l-3.0 3z" fill="#444444"/>
<path d="M1537.200 91.700H1525L1531.800 98L1525 104.600H1537.600" fill="none" stroke="#1e1e1e" stroke-width="2.100" stroke-linejoin="miter"/>
<path d="M1615.0 95.9h6l-3.0 3z" fill="#444444"/>
<rect x="1522.500" y="117.500" width="16" height="16" fill="#fff" stroke="#4a4a4a"/><rect x="1522" y="116.500" width="17" height="2.500" fill="#4a4a4a"/><path d="M1530.500 120.500v9M1526.300 125.500l4.200 4.200l4.200 -4.200" fill="none" stroke="#2e67a7" stroke-width="2.400"/>
<path d="M1566.7 123.0h6l-3.0 3z" fill="#444444"/>
<g transform="translate(1530.900 152.200) rotate(-46)"><rect x="-7.700" y="-3.900" width="15.400" height="7.800" rx="1" fill="#dc6b81"/><rect x="-4.800" y="-3.900" width="1.300" height="7.800" fill="#efb4c0"/></g>
<path d="M1582.0 150.5h6l-3.0 3z" fill="#444444"/>
<path d="M1650 99.500h18l-7 8v8h-3.800v-8z" fill="#454545"/><rect x="1658.300" y="108" width="1.800" height="6.500" fill="#fff"/><path d="M1652.500 101.300l5.800 6.400" stroke="#fff" stroke-width="1.100"/>
<path d="M1665.7 158.0h6l-3.0 3z" fill="#444444"/>
<circle cx="1707.500" cy="103.500" r="11" fill="#fff" stroke="#2e67a7" stroke-width="2.400"/><path d="M1699.500 112l-11.500 11.500" stroke="#2e67a7" stroke-width="4.200" stroke-linecap="round"/>
<path d="M1722.0 158.0h6l-3.0 3z" fill="#444444"/>
<path d="M1766.500 185.500l5 -5l5 5" fill="none" stroke="#1e1e1e" stroke-width="1.800"/>
<path d="M118.0 219.2h7l-3.5 3.6z" fill="#333"/>
<path d="M186.500 215.500l13 12M199.500 215.500l-13 12" stroke="#8a8a8a" stroke-width="1.800" fill="none"/>
<path d="M232 222l5 5.500l10 -12" stroke="#8c8c8c" stroke-width="2.400" fill="none"/>
<path d="M1767.600 218.800l4 4l4 -4" fill="none" stroke="#2a2a2a" stroke-width="2.500"/>
<path d="M34 252v15h-15z" fill="#ececec"/>
<path d="M151.8 297h7.200l-3.600 4.200z" fill="#4a4a4a"/><path d="M162.5 299v-8.500M161 292l1.500 -1.800l1.500 1.800" stroke="#4a4a4a" stroke-width="1.100" fill="none"/>
<path d="M319.8 294h7.400l-3.700 4.300z" fill="#4a4a4a"/>
<path d="M905.8 294h7.400l-3.700 4.300z" fill="#4a4a4a"/>
<path d="M1000.8 294h7.400l-3.700 4.300z" fill="#4a4a4a"/>
<path d="M1095.8 294h7.400l-3.700 4.300z" fill="#4a4a4a"/>
<path d="M1190.8 294h7.400l-3.700 4.300z" fill="#4a4a4a"/>
<path d="M1326.8 294h7.400l-3.700 4.300z" fill="#4a4a4a"/>
<path d="M1770.800 262.500h9.400l-4.700 -5.500z" fill="#2a2a2a"/><path d="M1770.800 972h9.400l-4.700 5.500z" fill="#2a2a2a"/>
<path d="M1726.800 803.200V828.600L1731.900 823.400L1735.200 830.600L1740.200 828.300L1737 821.900H1744.600Z" fill="#fff" stroke="#000" stroke-width="1.500" stroke-linejoin="miter"/>
<path d="M34 994v9l-5.500 -4.500z" fill="#a6a6a6"/><path d="M57.500 994v9l5.500 -4.500z" fill="#f0f0f0"/>
<circle cx="1037" cy="999" r="9.200" fill="none" stroke="#f4f4f4" stroke-width="1.700"/><path d="M1037 993.500v11M1031.500 999h11" stroke="#f4f4f4" stroke-width="2.100"/>
<path d="M1094.500 993.800v9.400l-5.500 -4.700z" fill="#2a2a2a"/><path d="M1750 993.800v9.400l5.500 -4.700z" fill="#2a2a2a"/>
<g fill="none" stroke="#e8e8e8" stroke-width="1.100"><rect x="68.500" y="1023.500" width="12" height="10.500"/></g><circle cx="70" cy="1022.500" r="3.300" fill="#e8e8e8"/><rect x="70" y="1019.500" width="10.500" height="3.500" fill="#e8e8e8"/><path d="M70.500 1027h8M70.500 1029.500h8M70.500 1032h8" stroke="#e8e8e8" stroke-width="1" stroke-dasharray="1.500 1"/>
<g fill="none" stroke="#f2f2f2" stroke-width="1.200"><rect x="1451.600" y="1019.600" width="15" height="15.200" stroke-width="1.400"/><path d="M1456.600 1019.500v15M1461.600 1019.500v15M1451.500 1024.700h15M1451.500 1029.800h15" stroke-width="1.400"/><rect x="1492.500" y="1019.500" width="16" height="14.500"/><rect x="1496.500" y="1022.500" width="8" height="8.500"/><path d="M1498.500 1025h4M1498.500 1027h4M1498.500 1029h4" stroke-width=".9"/><path d="M1534.500 1019.500h16v15h-16z"/></g><path d="M1535 1020h4.500v9h-4.500zM1540.500 1020h4.500v9h-4.500z" fill="#f2f2f2"/>
<path d="M1712 1027.500h10M1717 1022.500v10" stroke="#f2f2f2" stroke-width="2"/>
<path d="M12 1053.600l8.800 -1.300v8.200h-8.800zM21.800 1052.200l10.400 -1.500v9.800h-10.400zM12 1061.500h8.800v8.200l-8.800 -1.300zM21.800 1061.500h10.400v9.800l-10.400 -1.500z" fill="#fff"/>
<circle cx="68.700" cy="1059.500" r="7" fill="none" stroke="#fff" stroke-width="2.400"/><path d="M63.600 1064.800l-6 6" stroke="#fff" stroke-width="2.600"/>
<g fill="none" stroke="#fff" stroke-width="1.600"><rect x="103" y="1056" width="12" height="9.500"/><path d="M103 1051.500v2.500M115 1051.500v2.500M102.500 1052.300h13M103 1070v-2.500M115 1070v-2.500M102.500 1069.200h13M121 1051.500v18.500"/></g><rect x="119.300" y="1057.500" width="3.400" height="4" fill="#fff"/>
<rect x="152.500" y="1053.500" width="16" height="12" fill="#dff0fb" stroke="#b9b9b9"/><path d="M154 1061l3.500 -3.500l3.500 3.500l3.500 -3.500l3 3" fill="none" stroke="#2f7fc9" stroke-width="1.300"/><path d="M157 1070l2.500 -4h3l2.500 4z" fill="#bdbdbd"/><rect x="149" y="1058" width="3.500" height="11.500" fill="#9a9a9a"/><rect x="149.500" y="1059.500" width="2.300" height="2.300" fill="#5bd34a"/>
<circle cx="200.8" cy="1060.8" r="10" fill="#db4437"/><path d="M200.8 1060.8L192.14 1055.80A10 10 0 0 0 201.30 1070.80L205.80 1062.80z" fill="#0f9d58"/><path d="M200.8 1060.8L201.30 1070.80A10 10 0 0 0 209.80 1056.30L200.8 1056.30z" fill="#ffcd40"/><circle cx="200.8" cy="1060.8" r="4.60" fill="#fff"/><circle cx="200.8" cy="1060.8" r="3.60" fill="#4285f4"/>
<rect x="233" y="1053" width="20" height="15.700" fill="#3c3c3c"/><rect x="233" y="1053" width="20" height="3" fill="#8a8a8a"/><rect x="233" y="1053" width="7" height="3" fill="#cfcfcf"/><path d="M236 1059l3.500 3l-3.500 3" fill="none" stroke="#e8e8e8" stroke-width="1.500"/><rect x="241.500" y="1064.500" width="6" height="1.600" fill="#e8e8e8"/>
<path d="M287 1051l6 2.800v14.400l-6 2.800l-10 -9.200l-2.800 2.200l-1.400 -.8v-4.400l1.400 -.8l2.800 2.200zM287 1056.500l-5.500 4.500l5.500 4.500z" fill="#2a9df4" fill-rule="evenodd"/><path d="M287 1051l6 2.800v14.400l-6 2.800z" fill="#1f8ad2"/>
<path d="M409 1052.500h6l1.500 2h11v14h-18.500z" fill="#f7c64a"/><rect x="409" y="1056.500" width="18.500" height="12" fill="#fbd968"/><path d="M413 1062.500h10.500v6h-2.500v-3h-5.500v3h-2.500z" fill="#2f8fdd"/>
<defs><linearGradient id="ct" x1="0" x2="1"><stop offset="0" stop-color="#e8702c"/><stop offset=".5" stop-color="#ffffff"/><stop offset="1" stop-color="#3f86e0"/></linearGradient></defs><rect x="544.500" y="1053" width="16.500" height="15" rx="2" fill="url(#ct)"/><path d="M554.500 1053l-3.800 13" stroke="#6a6a6a" stroke-width="3"/><path d="M554.500 1053l-3.800 13" stroke="#f4f4f4" stroke-width="1.500"/><circle cx="550.600" cy="1067" r="1.900" fill="#e01515"/>
<rect x="678.500" y="1051.500" width="18.500" height="18.500" rx="3.500" fill="#fff"/><circle cx="687.800" cy="1059.500" r="3" fill="none" stroke="#2f6fe0" stroke-width="1.300"/><path d="M684 1065.500h7.600" stroke="#2f6fe0" stroke-width="1.300"/>
<circle cx="822.8" cy="1060.3" r="9.5" fill="#db4437"/><path d="M822.8 1060.3L814.57 1055.55A9.5 9.5 0 0 0 823.27 1069.80L827.55 1062.20z" fill="#0f9d58"/><path d="M822.8 1060.3L823.27 1069.80A9.5 9.5 0 0 0 831.35 1056.02L822.8 1056.02z" fill="#ffcd40"/><circle cx="822.8" cy="1060.3" r="4.37" fill="#fff"/><circle cx="822.8" cy="1060.3" r="3.42" fill="#4285f4"/>
<circle cx="828" cy="1066" r="4.200" fill="#e9dcc9"/><circle cx="828" cy="1064.800" r="1.600" fill="#9a7b4f"/>
<rect x="948.500" y="1052" width="10" height="17.500" fill="#1e7145"/><rect x="958.500" y="1053.500" width="9" height="14.500" fill="#fff"/><path d="M960 1056h6M960 1059h6M960 1062h6M960 1065h6M963 1054v13" stroke="#1e7145" stroke-width="1.200"/><path d="M950.500 1056.500l6 8.500M956.500 1056.500l-6 8.500" stroke="#fff" stroke-width="1.700"/>
<rect x="1082.500" y="1053.500" width="18.500" height="14" fill="#000" stroke="#fff" stroke-width="1.400"/><text x="1084.300" y="1065" font-size="11" font-weight="700" font-family="Liberation Sans,sans-serif" fill="#fff">7z</text>
<path d="M1223 1065l8 -7.500l8 7.500" fill="none" stroke="#fff" stroke-width="1.500"/>
<rect x="1381" y="1060" width="15" height="10" fill="#d9d9d9"/><rect x="1382" y="1061" width="9" height="3" fill="#2e4fd0"/><rect x="1382" y="1065" width="13" height="4" fill="#555"/><path d="M1392 1062l5 -8" stroke="#333" stroke-width="1.800"/><circle cx="1396.500" cy="1054" r="3" fill="#e01b1b"/>
<circle cx="1431.200" cy="1060.800" r="9.500" fill="#2f8fe8"/><path d="M1431.200 1051.300a9.500 9.500 0 0 1 9.500 9.500h-6a3.500 3.500 0 0 0 -3.500 -3.500z" fill="#f4b400"/><path d="M1440.700 1060.800a9.500 9.500 0 0 1 -9.500 9.500v-6a3.500 3.500 0 0 0 3.500 -3.500z" fill="#34a853"/><path d="M1431.200 1051.300a9.500 9.500 0 0 0 -9.500 9.500h6a3.500 3.500 0 0 1 3.500 -3.500z" fill="#ea4335"/><circle cx="1431.200" cy="1060.800" r="3.600" fill="#1b1b1b"/>
<path d="M1460.500 1054h15v6q0 8.500 -7.500 8.500t-7.500 -8.500z" fill="#98a2ac"/><path d="M1475.500 1056h3q2.500 0 2.500 3t-5.500 4" fill="none" stroke="#98a2ac" stroke-width="1.600"/>
<ellipse cx="1510.500" cy="1061.200" rx="7.800" ry="10.400" fill="#1e88e5"/><path d="M1506.500 1057l8 8l-4 3.600v-14.800l4 3.600l-8 8" fill="none" stroke="#fff" stroke-width="1.300"/>
<path d="M1551 1051.500q4 2.500 9 2.500q.5 12 -9 16.500q-9.500 -4.500 -9 -16.500q5 0 9 -2.500z" fill="#fff"/><path d="M1551 1051.500v19M1542 1060.500h18" stroke="#1b1b1b" stroke-width="1.200"/><circle cx="1556" cy="1066" r="4.600" fill="#e03131"/><path d="M1554 1064l4 4M1558 1064l-4 4" stroke="#fff" stroke-width="1.200"/>
<rect x="1586.500" y="1056.500" width="14" height="10" fill="none" stroke="#fff" stroke-width="1.400"/><rect x="1588.500" y="1058.500" width="7" height="6" fill="#fff"/><rect x="1601" y="1059.500" width="1.600" height="4" fill="#fff"/><path d="M1581 1059.500h4v4h-4zM1582 1058v1.500M1584 1058v1.500M1583 1063.500v3" stroke="#fff" stroke-width="1.100" fill="#fff"/>
<g fill="none" stroke="#d8d8d8" stroke-width="1.500"><path d="M1624 1070a15.500 15.500 0 0 1 15.500 -15.500" opacity=".55"/><path d="M1628.500 1070a11 11 0 0 1 11 -11"/><path d="M1633 1070a6.500 6.500 0 0 1 6.500 -6.500"/></g><circle cx="1638" cy="1068.500" r="1.800" fill="#fff"/>
<path d="M1662 1058.500h3.500l4.500 -4v14l-4.500 -4h-3.500z" fill="none" stroke="#fff" stroke-width="1.300"/><path d="M1673 1058l6 6M1679 1058l-6 6" stroke="#fff" stroke-width="1.400"/>
<g fill="none" stroke="#fff" stroke-width="1.300"><rect x="1707.500" y="1052.500" width="7" height="5"/><path d="M1705.500 1057.500h11v11.500h-11zM1711 1065v5.500M1713 1069l3 2.500l3 -4"/></g>
</svg>
</body></html>
